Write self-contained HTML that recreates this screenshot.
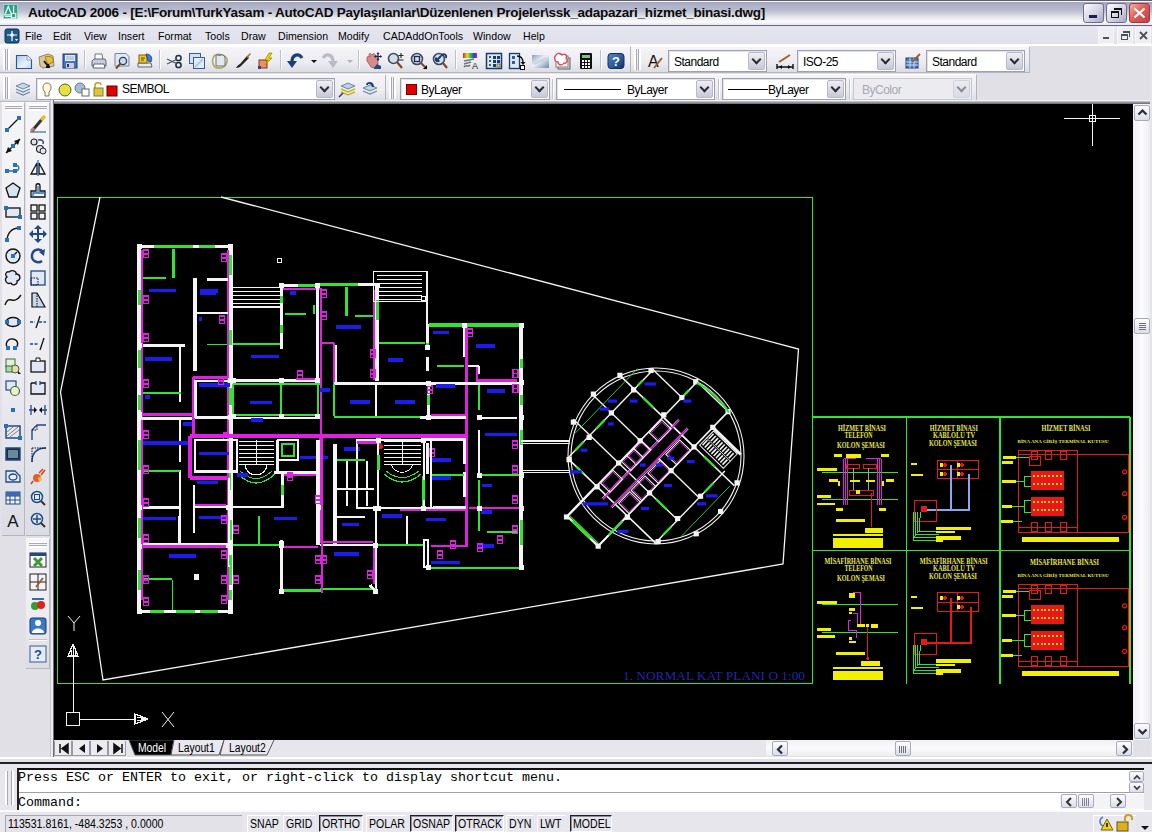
<!DOCTYPE html>
<html><head><meta charset="utf-8">
<style>
*{margin:0;padding:0;box-sizing:border-box}
html,body{width:1152px;height:832px;overflow:hidden;background:#e0e0e6;font-family:"Liberation Sans",sans-serif;font-size:11px;color:#000;position:relative}
.a{position:absolute}
#title{left:0;top:0;width:1152px;height:26px;background:linear-gradient(#5c5c72 0,#5c5c72 1px,#fafafe 1px,#fafafe 2px,#a2a4ba 2px,#aeb0c6 5px,#b8bace 10px,#d0d2dc 14px,#eaebee 18px,#fbfbfb 22px,#e4e4ea 25px,#68687e 25px,#68687e 26px)}
#title .t{left:28px;top:5px;font-size:13.5px;font-weight:bold;letter-spacing:-0.24px;color:#0a0a0a;white-space:nowrap}
.wb{position:absolute;top:3px;width:21px;height:20px;border:1px solid #6e6e88;border-radius:3px;background:linear-gradient(135deg,#fbfbff,#d8d8e6 50%,#a8a8c4)}
#menu{left:0;top:26px;width:1152px;height:20px;background:linear-gradient(#e6e6f2,#e0e0ea 18px,#fff 18px,#fff 20px)}
#menu span{position:absolute;top:3.5px;font-size:10.6px;color:#000}
.mb{position:absolute;top:1px;width:16px;height:17px;background:#ededf2;border:1px solid #f6f6f8}
.tbar{position:absolute;background:linear-gradient(#f5f5f8,#ececf1 60%,#dcdce4);border-right:1px solid #b5b5c2;border-bottom:1px solid #b5b5c2;border-top:1px solid #fff}
.grip{position:absolute;width:7px;border-left:2px solid #fff;border-right:2px solid #fff;box-shadow:inset 1px 0 #a8a8b6,inset -1px 0 #a8a8b6}
.ggrip{position:absolute;height:7px;border-top:2px solid #fff;border-bottom:2px solid #fff;box-shadow:inset 0 1px #a8a8b6,inset 0 -1px #a8a8b6}
.sep{position:absolute;width:2px;border-left:1px solid #c0c0cc;border-right:1px solid #fff}
.combo{position:absolute;background:#fff;border:1px solid #9da0b4;box-shadow:inset 1px 1px #e2e2e8}
.combo .tx{position:absolute;left:5px;top:3.5px;font-size:12px;letter-spacing:-0.5px;white-space:nowrap}
.dd{position:absolute;right:1px;top:1px;bottom:1px;width:17px;background:linear-gradient(#eeeef4,#c8c9d9);border:1px solid #b7b8c9;border-radius:2px}
.dd:after{content:"";position:absolute;left:4px;top:3px;width:5px;height:5px;border-right:2.2px solid #2a2a34;border-bottom:2.2px solid #2a2a34;transform:rotate(45deg)}
.ic{position:absolute;width:18px;height:18px}
#canvas{left:54px;top:104px;width:1079px;height:636px;background:#000;overflow:hidden}
.sb{position:absolute;background:linear-gradient(90deg,#f0f0f4,#fcfcfd 50%,#eeeef2)}
.sbtn{position:absolute;width:16px;height:16px;border:1px solid #a9aabd;border-radius:2px;background:linear-gradient(#fdfdff,#dcdde8)}
.mono{font-family:"Liberation Mono",monospace}
.stb{position:absolute;top:815px;height:17px;font-size:12px;padding-left:2px;padding-top:1px;white-space:nowrap;overflow:hidden;border:1px solid #e9e9ee;border-top-color:#fff;border-left-color:#fff}
.stb span,.crd span{display:inline-block;transform:scaleX(.88);transform-origin:0 0}
.stb.on{border:1px solid #1f1f26;border-right-color:#fff;border-bottom-color:#fff;box-shadow:inset 1px 1px #8d8d98}
</style></head><body>
<div id="title" class="a">
<svg class="a" style="left:3px;top:4px" width="15" height="15" viewBox="0 0 17 18" preserveAspectRatio="none"><rect x="0.5" y="0.5" width="16" height="17" fill="#2f9e8a" stroke="#a9d9cf"/><path d="M2 13 L6 3 L10 13 Z" fill="none" stroke="#e8fff8" stroke-width="1.4"/><path d="M2 15 H15 M12 2 V16" stroke="#e8fff8" stroke-width="1.4"/><rect x="9.5" y="11.5" width="5" height="5" fill="#2f9e8a" stroke="#fff" stroke-width="1.2"/></svg>
<div class="t a">AutoCAD 2006 - [E:\Forum\TurkYasam - AutoCAD Paylaşılanlar\Düzenlenen Projeler\ssk_adapazari_hizmet_binasi.dwg]</div>
<div class="wb" style="left:1083px"><div class="a" style="left:5px;top:11px;width:8px;height:3px;background:#1c1c50"></div></div>
<div class="wb" style="left:1106px"><div class="a" style="left:4px;top:7px;width:8px;height:7px;border:1px solid #111;border-top-width:2px"></div><div class="a" style="left:7px;top:4px;width:8px;height:7px;border-top:2px solid #111;border-right:1px solid #111"></div></div>
<div class="wb" style="left:1129px;background:linear-gradient(135deg,#f5b0a0,#e0605a 45%,#c8384a);border-color:#9a3a40"><svg class="a" style="left:3px;top:3px" width="13" height="12"><path d="M1.5 1.5 L11.5 10.5 M11.5 1.5 L1.5 10.5" stroke="#fff" stroke-width="2.2"/></svg></div>
</div><div id="menu" class="a"><svg class="a" style="left:4px;top:2px" width="17" height="16" viewBox="0 0 17 16"><rect x="1" y="1" width="14" height="14" rx="2" fill="#1d5a8c" stroke="#0d3050"/><path d="M8 3 V13 M3 7 H13" stroke="#fff" stroke-width="1.2"/><circle cx="8" cy="7" r="1.8" fill="#fff"/><path d="M11 11 l3 0 l-1.5 2z" fill="#fff"/></svg><span style="left:25px">File</span><span style="left:53px">Edit</span><span style="left:84px">View</span><span style="left:118px">Insert</span><span style="left:158px">Format</span><span style="left:205px">Tools</span><span style="left:241px">Draw</span><span style="left:278px">Dimension</span><span style="left:338px">Modify</span><span style="left:383px">CADAddOnTools</span><span style="left:473px">Window</span><span style="left:523px">Help</span><div class="mb" style="left:1098px"><div class="a" style="left:4px;top:9px;width:6px;height:2px;background:#505058"></div></div><div class="mb" style="left:1117px"><div class="a" style="left:3px;top:6px;width:7px;height:6px;border:1px solid #505058;border-top-width:2px"></div><div class="a" style="left:5px;top:3px;width:7px;height:6px;border-top:2px solid #505058;border-right:1px solid #505058"></div></div><div class="mb" style="left:1135px"><svg class="a" style="left:3px;top:3px" width="9" height="9"><path d="M1 1 L8 8 M8 1 L1 8" stroke="#505058" stroke-width="1.8"/></svg></div></div><div class="tbar" style="left:0px;top:46px;width:631px;height:27px"></div><div class="grip" style="left:3px;top:49px;height:21px"></div><div class="tbar" style="left:631px;top:46px;width:399px;height:27px"></div><div class="grip" style="left:634px;top:49px;height:21px"></div><div class="tbar" style="left:0px;top:74px;width:386px;height:28px"></div><div class="grip" style="left:3px;top:77px;height:22px"></div><div class="tbar" style="left:386px;top:74px;width:591px;height:28px"></div><div class="grip" style="left:389px;top:77px;height:22px"></div><div class="sep" style="left:84px;top:50px;height:19px"></div><div class="sep" style="left:159px;top:50px;height:19px"></div><div class="sep" style="left:280px;top:50px;height:19px"></div><div class="sep" style="left:358px;top:50px;height:19px"></div><div class="sep" style="left:455px;top:50px;height:19px"></div><div class="sep" style="left:600px;top:50px;height:19px"></div><svg class="a" style="left:15px;top:52px" width="18" height="18" viewBox="0 0 18 18"><defs><linearGradient id="nw" x1="0" y1="0" x2="1" y2="1"><stop offset="0" stop-color="#a8c8e8"/><stop offset=".6" stop-color="#e8f2fa"/><stop offset="1" stop-color="#b8d4ec"/></linearGradient></defs><path d="M1.5 3.5 H12 L16.5 8 V16.5 H1.5 Z" fill="url(#nw)" stroke="#2a5a8a" stroke-width="1.1"/><path d="M12 3.5 V8 H16.5" fill="#fff" stroke="#6a8aaa" stroke-width="0.8"/></svg><svg class="a" style="left:38px;top:52px" width="18" height="18" viewBox="0 0 18 18"><path d="M1 5 L10 2 L15 4 L16 14 L5 16 L2 14Z" fill="#d8c8a0" stroke="#8a7a50" stroke-width="0.9"/><path d="M7 5 C13 3 16 6 15 10 L10 13Z" fill="#e8c030" stroke="#8a7010" stroke-width="0.8"/><path d="M6 9 L10 14 M8 15 L11 15 L10 12" fill="none" stroke="#111" stroke-width="1.8"/></svg><svg class="a" style="left:61px;top:52px" width="18" height="18" viewBox="0 0 18 18"><rect x="2" y="2" width="14" height="14" fill="#4a72b8" stroke="#1c3a78"/><rect x="4" y="3" width="10" height="6" fill="#e4ecf8"/><path d="M5 5 H13 M5 7 H13" stroke="#9ab"/><rect x="5" y="11" width="8" height="5" fill="#c8d0e0"/><rect x="6" y="12" width="2" height="3" fill="#1c3a78"/></svg><svg class="a" style="left:90px;top:52px" width="18" height="18" viewBox="0 0 18 18"><path d="M5 2 H12 L13 8 H5Z" fill="#fff" stroke="#606880" stroke-width="0.9"/><path d="M2 9 L4 7 H15 L16 9 V14 H2Z" fill="#c8ccd8" stroke="#505870" stroke-width="0.9"/><path d="M4 12 H14 L15 16 H3Z" fill="#fff" stroke="#505870" stroke-width="0.9"/></svg><svg class="a" style="left:113px;top:52px" width="18" height="18" viewBox="0 0 18 18"><path d="M2 1.5 H13 L16 4.5 V14 H2Z" fill="#e0e8f4" stroke="#6a7a98" stroke-width="0.9"/><circle cx="10" cy="9" r="3.6" fill="#c8dcf0" stroke="#304050" stroke-width="1.3"/><path d="M7.5 11.5 L3 16.5" stroke="#7a4a30" stroke-width="2"/></svg><svg class="a" style="left:136px;top:52px" width="18" height="18" viewBox="0 0 18 18"><path d="M2 11 H15 L16 15 H2Z" fill="#e8eaf0" stroke="#505870" stroke-width="0.9"/><rect x="3" y="3" width="8" height="8" fill="#f0c820" stroke="#806010"/><path d="M5 6 H9 M5 8 H8" stroke="#604000"/><path d="M10 2 C15 2 17 6 15 10 L12 9Z" fill="#3a7ad0" stroke="#1a3a70" stroke-width="0.8"/></svg><svg class="a" style="left:165px;top:52px" width="18" height="18" viewBox="0 0 18 18"><circle cx="13.5" cy="6" r="2.6" fill="none" stroke="#1a2a40" stroke-width="1.5"/><circle cx="13.5" cy="13" r="2.6" fill="none" stroke="#1a2a40" stroke-width="1.5"/><path d="M2 7 L11.5 11.5 M2 12 L11.5 7.5" stroke="#505868" stroke-width="1.3"/></svg><svg class="a" style="left:188px;top:52px" width="18" height="18" viewBox="0 0 18 18"><rect x="1.5" y="1.5" width="11" height="10" fill="#cfe0f0" stroke="#3a6090"/><rect x="5.5" y="5.5" width="11" height="11" fill="#e0ecf8" stroke="#3a6090"/><path d="M7 15 L15 7" stroke="#b0c8e0" stroke-width="2"/></svg><svg class="a" style="left:211px;top:52px" width="18" height="18" viewBox="0 0 18 18"><path d="M3 4 C6 1 14 2 16 7 C17 13 12 17 6 16 C2 15 0 9 3 4Z" fill="none" stroke="#b8a850" stroke-width="1.6"/><path d="M5 3 H12 L14 5 V14 H5Z" fill="#e0e8f0" stroke="#5a6a80" stroke-width="0.9"/><path d="M7 2 H10 V4 H7Z" fill="#888"/></svg><svg class="a" style="left:234px;top:52px" width="18" height="18" viewBox="0 0 18 18"><path d="M2 16 C3 14 4 13 6 12 L13 4 L15 6 L7 14 C6 15 4 16 2 16Z" fill="#222"/><path d="M12 5 L16 1 L17 2 L13.5 6Z" fill="#a07040"/></svg><svg class="a" style="left:257px;top:52px" width="18" height="18" viewBox="0 0 18 18"><rect x="2" y="8" width="8" height="8" fill="#f09060" stroke="#903010"/><path d="M12 1 L8 8 H11 L8 13 L15 6 H12 L15 1Z" fill="#f0d000" stroke="#a08000" stroke-width="0.7"/><rect x="1" y="14" width="3" height="3" fill="#1c4a8c"/></svg><svg class="a" style="left:286px;top:52px" width="18" height="18" viewBox="0 0 18 18"><path d="M16 6 C13 1 6 2 6 10" fill="none" stroke="#1b3f78" stroke-width="3.2"/><path d="M1 9 L11 9 L6 16Z" fill="#1b3f78"/></svg><svg class="a" style="left:305px;top:52px" width="18" height="18" viewBox="0 0 18 18"><path d="M6 8 H12 L9 11 Z" fill="#111"/></svg><svg class="a" style="left:321px;top:52px" width="18" height="18" viewBox="0 0 18 18"><path d="M2 6 C5 1 12 2 12 10" fill="none" stroke="#b8bcc4" stroke-width="3.2"/><path d="M7 9 L17 9 L12 16Z" fill="#b8bcc4"/></svg><svg class="a" style="left:341px;top:52px" width="18" height="18" viewBox="0 0 18 18"><path d="M6 8 H12 L9 11 Z" fill="#b0b0b8"/></svg><svg class="a" style="left:365px;top:52px" width="18" height="18" viewBox="0 0 18 18"><path d="M2 6 C2 4 4 4 5 5 L4 3 C4 1 6 1 7 3 L8 2 C9 1 10 2 10 3 L11 4 C12 3 13 4 13 5 L13 12 L9 16 L6 15 L2 9Z" fill="#d88a86" stroke="#a05050" stroke-width="0.8"/><path d="M9 16 L12 12 L16 14 V17 H9Z" fill="#1f4a86"/><path d="M13 1 V8 M9.5 4.5 H16.5" stroke="#1a2a50" stroke-width="1.2"/><path d="M13 0 L11.5 2 H14.5Z M13 9 L11.5 7 H14.5Z M9 4.5 L11 3 V6Z M17 4.5 L15 3 V6Z" fill="#1a2a50"/></svg><svg class="a" style="left:387px;top:52px" width="18" height="18" viewBox="0 0 18 18"><circle cx="6.5" cy="6.5" r="5" fill="#d4dce8" stroke="#3c4c60" stroke-width="1.6"/><path d="M10 10 L15 16" stroke="#7a4a30" stroke-width="2.2"/><path d="M14 1 V6 M11.5 3.5 H16.5 M11.5 8 H16.5" stroke="#222" stroke-width="1.1"/></svg><svg class="a" style="left:410px;top:52px" width="18" height="18" viewBox="0 0 18 18"><circle cx="7" cy="7" r="5.5" fill="#d4dce8" stroke="#3c4c60" stroke-width="1.6"/><rect x="4.5" y="4.5" width="5" height="5" fill="none" stroke="#1a2a50" stroke-width="1.3"/><path d="M11 11 L15 15" stroke="#7a4a30" stroke-width="2.2"/><path d="M13 17 L17 13 V17Z" fill="#000"/></svg><svg class="a" style="left:432px;top:52px" width="18" height="18" viewBox="0 0 18 18"><circle cx="7" cy="7" r="5.5" fill="#d4dce8" stroke="#3c4c60" stroke-width="1.6"/><path d="M4 9 L9 4 M4 9 V5.5 M4 9 H7.5" stroke="#1a3a70" stroke-width="2"/><path d="M9 4 C11 1 15 2 14 6" fill="none" stroke="#1a3a70" stroke-width="1.8"/><path d="M11 11 L15 16" stroke="#7a4a30" stroke-width="2.2"/></svg><svg class="a" style="left:462px;top:52px" width="18" height="18" viewBox="0 0 18 18"><defs><linearGradient id="rb" x1="0" x2="1"><stop offset="0" stop-color="#e02020"/><stop offset=".3" stop-color="#e0e020"/><stop offset=".55" stop-color="#20c040"/><stop offset=".8" stop-color="#2040e0"/><stop offset="1" stop-color="#c020c0"/></linearGradient></defs><rect x="1" y="1" width="14" height="5" fill="url(#rb)"/><path d="M2 9 L12 7 M2 12 L9 10" stroke="#707880" stroke-width="1.6"/><path d="M2 15 C4 12 6 16 8 13" fill="none" stroke="#606870" stroke-width="1.4"/><text x="13" y="17" font-size="9" font-family="Liberation Sans" text-anchor="middle" fill="#222">A</text></svg><svg class="a" style="left:485px;top:52px" width="18" height="18" viewBox="0 0 18 18"><rect x="1.5" y="1.5" width="15" height="15" fill="#dce8f4" stroke="#1a3a70" stroke-width="1.5"/><path d="M4 4h2v2H4zM4 8h2v2H4zM4 12h2v2H4z" fill="#3a6a3a"/><path d="M8 4h3v3H8zM12 4h3v3h-3zM8 8h3v3H8zM12 8h3v3h-3zM8 12h3v3H8z" fill="#1a3a70"/><rect x="12" y="12" width="3" height="3" fill="#e0e080" stroke="#333" stroke-width="0.6"/></svg><svg class="a" style="left:508px;top:52px" width="18" height="18" viewBox="0 0 18 18"><rect x="1.5" y="1.5" width="10" height="15" fill="#dce8f4" stroke="#1a3a70" stroke-width="1.3"/><path d="M4 4h3v3H4zM4 9h3v3H4z" fill="#3a5a90"/><path d="M9 4 C14 4 15 7 15 11" fill="none" stroke="#111" stroke-width="1.3"/><path d="M12.5 10 L17.5 10 L15 13Z" fill="#111"/><rect x="12.5" y="13.5" width="4" height="4" fill="#fff" stroke="#111"/></svg><svg class="a" style="left:531px;top:52px" width="18" height="18" viewBox="0 0 18 18"><defs><linearGradient id="ss" x1="0" y1="0" x2="1" y2="1"><stop offset="0" stop-color="#8aa0b8"/><stop offset=".45" stop-color="#eef2f6"/><stop offset="1" stop-color="#6a88a8"/></linearGradient></defs><rect x="1" y="3" width="17" height="13" fill="url(#ss)"/><path d="M3 12 L15 6" stroke="#c8d4e0" stroke-width="2.5"/></svg><svg class="a" style="left:553px;top:52px" width="18" height="18" viewBox="0 0 18 18"><rect x="5" y="6" width="12" height="11" fill="#d8d8d8" stroke="#606060"/><rect x="3" y="4" width="12" height="11" fill="#f4f4f4" stroke="#808080"/><path d="M3 3 C5 0 8 2 9 3 C11 1 15 3 13 6 C16 8 13 12 11 11 C9 14 5 13 5 10 C1 10 1 5 3 3Z" fill="#fff" stroke="#e04050" stroke-width="1.3"/></svg><svg class="a" style="left:577px;top:52px" width="18" height="18" viewBox="0 0 18 18"><rect x="3" y="1" width="12" height="16" rx="1" fill="#111"/><rect x="5" y="3" width="8" height="3" fill="#80c080"/><path d="M5 8h2v2H5zM8 8h2v2H8zM11 8h2v2h-2zM5 11h2v2H5zM8 11h2v2H8zM11 11h2v2h-2zM5 14h2v2H5zM8 14h2v2H8zM11 14h2v2h-2z" fill="#fff"/></svg><svg class="a" style="left:607px;top:52px" width="18" height="18" viewBox="0 0 18 18"><defs><linearGradient id="hp" x1="0" y1="0" x2="1" y2="1"><stop offset="0" stop-color="#5a88c8"/><stop offset="1" stop-color="#0e3470"/></linearGradient></defs><rect x="1" y="1.5" width="16" height="15" rx="3" fill="url(#hp)" stroke="#0e3060"/><text x="9" y="14" font-size="13" font-weight="bold" text-anchor="middle" fill="#fff" font-family="Liberation Sans">?</text></svg><svg class="a" style="left:646px;top:52px" width="18" height="18" viewBox="0 0 18 18"><text x="2" y="15" font-size="16" font-family="Liberation Sans" fill="#111">A</text><path d="M8 16 L16 6" stroke="#a06030" stroke-width="2"/></svg><div class="combo" style="left:668px;top:50px;width:99px;height:22px;background:#fff"><div class="tx" style="color:#000">Standard</div><div class="dd"></div></div><svg class="a" style="left:776px;top:52px" width="18" height="18" viewBox="0 0 18 18"><path d="M3 10 L14 3" stroke="#a06030" stroke-width="2"/><path d="M1 15 H17 M1 12 V17 M17 12 V17" stroke="#111" stroke-width="1.4"/><path d="M3 15 L6 13 V17Z M15 15 L12 13 V17Z" fill="#111"/></svg><div class="combo" style="left:797px;top:50px;width:99px;height:22px;background:#fff"><div class="tx" style="color:#000">ISO-25</div><div class="dd"></div></div><svg class="a" style="left:904px;top:52px" width="18" height="18" viewBox="0 0 18 18"><rect x="2" y="6" width="12" height="10" fill="#4a7ac8" stroke="#223c70"/><path d="M2 10 H14 M2 13 H14 M6 6 V16 M10 6 V16" stroke="#cfe0f4"/><path d="M8 10 L16 2" stroke="#a06030" stroke-width="2"/></svg><div class="combo" style="left:926px;top:50px;width:99px;height:22px;background:#fff"><div class="tx" style="color:#000">Standard</div><div class="dd"></div></div><svg class="a" style="left:14px;top:80px" width="18" height="18" viewBox="0 0 18 18"><path d="M2 6 L9 3 L16 6 L9 9Z" fill="#c8d8e8" stroke="#6a88a8"/><path d="M2 9 L9 12 L16 9 M2 12 L9 15 L16 12" fill="none" stroke="#6a88a8" stroke-width="1.3"/></svg><div class="combo" style="left:36px;top:78px;width:299px;height:22px"><svg class="a" style="left:4px;top:2px" width="80" height="17" viewBox="0 0 80 17"><path d="M6 2 C1 2 1 9 4 11 V15 H8 V11 C11 9 11 2 6 2Z" fill="#fff8d0" stroke="#777"/><circle cx="24" cy="9" r="6" fill="#e8e040" stroke="#4a6a20"/><circle cx="39" cy="7" r="5" fill="#a8bcd0" stroke="#6a7a90"/><rect x="41" y="8" width="7" height="7" fill="#fff" stroke="#666"/><path d="M54 8 V4 C54 1 60 1 60 4" fill="none" stroke="#b8a030" stroke-width="1.5"/><rect x="53" y="7" width="9" height="8" fill="#d8c840" stroke="#907820"/><rect x="66" y="5" width="10" height="10" fill="#e00000" stroke="#600"/></svg><div class="tx" style="left:85px;top:3px">SEMBOL</div><div class="dd"></div></div><svg class="a" style="left:338px;top:80px" width="18" height="18" viewBox="0 0 18 18"><path d="M3 6 L10 3 L17 6 L10 9Z" fill="#c0d0e0" stroke="#6a88a8"/><path d="M3 9 L10 12 L17 9 M3 12 L10 15 L17 12" fill="none" stroke="#c8b820" stroke-width="1.6"/><path d="M1 17 L5 13" stroke="#1a3a70" stroke-width="1.5"/></svg><svg class="a" style="left:361px;top:80px" width="18" height="18" viewBox="0 0 18 18"><path d="M2 8 L9 5 L16 8 L9 11Z" fill="#c0d0e0" stroke="#6a88a8"/><path d="M2 11 L9 14 L16 11" fill="none" stroke="#6a88a8" stroke-width="1.3"/><path d="M12 7 C12 2 6 2 6 5" fill="none" stroke="#1a3a70" stroke-width="1.8"/></svg><div class="combo" style="left:400px;top:78px;width:150px;height:22px"><div class="a" style="left:5px;top:5px;width:11px;height:11px;background:#e00000;border:1px solid #700"></div><div class="tx" style="left:20px">ByLayer</div><div class="dd"></div></div><div class="sep" style="left:552px;top:79px;height:20px"></div><div class="combo" style="left:556px;top:78px;width:159px;height:22px"><div class="a" style="left:7px;top:10px;width:57px;height:1px;background:#000"></div><div class="tx" style="left:70px">ByLayer</div><div class="dd"></div></div><div class="sep" style="left:718px;top:79px;height:20px"></div><div class="combo" style="left:722px;top:78px;width:124px;height:22px"><div class="a" style="left:5px;top:10px;width:40px;height:1px;background:#000"></div><div class="tx" style="left:45px">ByLayer</div><div class="dd"></div></div><div class="sep" style="left:849px;top:79px;height:20px"></div><div class="combo" style="left:853px;top:78px;width:119px;height:22px;background:#ececf0;border-color:#c8c8d0;box-shadow:none"><div class="tx" style="left:8px;color:#a8a8b0">ByColor</div><div class="dd" style="opacity:.5"></div></div><div class="tbar" style="left:2px;top:102px;width:23px;height:434px"></div><div class="ggrip" style="left:5px;top:104px;width:17px"></div><div class="tbar" style="left:26px;top:102px;width:24px;height:434px"></div><div class="ggrip" style="left:29px;top:104px;width:18px"></div><div class="tbar" style="left:26px;top:538px;width:24px;height:131px"></div><div class="ggrip" style="left:29px;top:541px;width:18px"></div><svg class="a" style="left:4px;top:115px" width="18" height="18" viewBox="0 0 18 18"><path d="M3 15 L15 3" stroke="#111" stroke-width="1.3"/><rect x="1" y="13" width="4" height="4" fill="#2a70b8"/><rect x="13" y="1" width="4" height="4" fill="#2a70b8"/></svg><svg class="a" style="left:4px;top:137px" width="18" height="18" viewBox="0 0 18 18"><path d="M2 16 L16 2" stroke="#111" stroke-width="1.5"/><path d="M16 2 L10 4 L14 8Z M2 16 L4 10 L8 14Z" fill="#111"/><rect x="7" y="7" width="4" height="4" fill="#2a70b8"/></svg><svg class="a" style="left:4px;top:159px" width="18" height="18" viewBox="0 0 18 18"><path d="M2 12 H11 M11 6 C16 6 16 12 11 12" fill="none" stroke="#2a70b8" stroke-width="1.4"/><rect x="1" y="10" width="4" height="4" fill="#2a70b8"/><rect x="9" y="10" width="4" height="4" fill="#2a70b8"/><rect x="9" y="4" width="4" height="4" fill="#2a70b8"/></svg><svg class="a" style="left:4px;top:181px" width="18" height="18" viewBox="0 0 18 18"><path d="M9 2 L16 7 L13 16 H5 L2 7Z" fill="#d8e4f0" stroke="#111" stroke-width="1.3"/></svg><svg class="a" style="left:4px;top:203px" width="18" height="18" viewBox="0 0 18 18"><rect x="2" y="5" width="14" height="9" fill="#dfe8f4" stroke="#111" stroke-width="1.3"/><rect x="0" y="3" width="4" height="4" fill="#2a70b8"/><rect x="14" y="12" width="4" height="4" fill="#2a70b8"/></svg><svg class="a" style="left:4px;top:225px" width="18" height="18" viewBox="0 0 18 18"><path d="M3 16 C3 8 8 3 15 3" fill="none" stroke="#111" stroke-width="1.4"/><rect x="1" y="13" width="4" height="4" fill="#2a70b8"/><rect x="13" y="1" width="4" height="4" fill="#2a70b8"/></svg><svg class="a" style="left:4px;top:247px" width="18" height="18" viewBox="0 0 18 18"><circle cx="9" cy="9" r="7" fill="#dfe8f4" stroke="#111" stroke-width="1.4"/><path d="M9 9 L13 5" stroke="#111" stroke-width="1.3"/><rect x="7" y="7" width="4" height="4" fill="#2a70b8"/></svg><svg class="a" style="left:4px;top:269px" width="18" height="18" viewBox="0 0 18 18"><path d="M5 3 C9 0 13 3 12 5 C17 5 17 11 13 12 C14 16 8 17 7 14 C2 16 0 10 3 8 C0 5 3 2 5 3Z" fill="#dfe8f4" stroke="#111" stroke-width="1.3"/></svg><svg class="a" style="left:4px;top:291px" width="18" height="18" viewBox="0 0 18 18"><path d="M1 14 C5 2 9 16 17 4" fill="none" stroke="#111" stroke-width="1.4"/></svg><svg class="a" style="left:4px;top:313px" width="18" height="18" viewBox="0 0 18 18"><ellipse cx="9" cy="9" rx="7" ry="4.5" fill="#dfe8f4" stroke="#111" stroke-width="1.4"/><rect x="1" y="7" width="4" height="4" fill="#2a70b8"/><rect x="13" y="7" width="4" height="4" fill="#2a70b8"/></svg><svg class="a" style="left:4px;top:335px" width="18" height="18" viewBox="0 0 18 18"><path d="M4 13 C0 9 4 3 9 4 C15 5 15 12 10 13" fill="none" stroke="#111" stroke-width="1.4"/><rect x="2" y="11" width="4" height="4" fill="#2a70b8"/><rect x="9" y="11" width="4" height="4" fill="#2a70b8"/></svg><svg class="a" style="left:4px;top:357px" width="18" height="18" viewBox="0 0 18 18"><rect x="2" y="2" width="9" height="8" fill="#e4f0d8" stroke="#3a6a3a"/><circle cx="11" cy="12" r="4" fill="#e0e0a0" stroke="#555"/><rect x="2" y="9" width="6" height="6" fill="#b0d8b0" stroke="#3a6a3a"/><path d="M14 14 L17 17 L14 17Z" fill="#111"/></svg><svg class="a" style="left:4px;top:379px" width="18" height="18" viewBox="0 0 18 18"><rect x="2" y="2" width="10" height="9" fill="#dfe8f4" stroke="#1f4a86" stroke-width="1.2"/><circle cx="11" cy="12" r="4.5" fill="#e8f0d0" stroke="#3a6a3a" stroke-width="1.2"/></svg><svg class="a" style="left:4px;top:401px" width="18" height="18" viewBox="0 0 18 18"><rect x="7" y="7" width="4" height="4" fill="#2a70b8"/></svg><svg class="a" style="left:4px;top:423px" width="18" height="18" viewBox="0 0 18 18"><rect x="2" y="3" width="14" height="12" fill="none" stroke="#1f4a86" stroke-width="1.5"/><path d="M3 13 L14 4 M6 14 L15 7 M3 9 L9 4" stroke="#888" stroke-width="1"/><rect x="0" y="1" width="4" height="4" fill="#2a70b8"/><rect x="14" y="13" width="4" height="4" fill="#2a70b8"/></svg><svg class="a" style="left:4px;top:445px" width="18" height="18" viewBox="0 0 18 18"><rect x="2" y="3" width="14" height="12" fill="#1c2c3c" stroke="#1f4a86" stroke-width="1.5"/><rect x="4" y="5" width="10" height="8" fill="#6a8a9a"/></svg><svg class="a" style="left:4px;top:467px" width="18" height="18" viewBox="0 0 18 18"><path d="M2 4 H11 L16 9 V15 H2Z" fill="#e4ecf4" stroke="#1f4a86" stroke-width="1.3"/><ellipse cx="9" cy="10" rx="4" ry="3" fill="none" stroke="#1f4a86" stroke-width="1.3"/></svg><svg class="a" style="left:4px;top:489px" width="18" height="18" viewBox="0 0 18 18"><rect x="2" y="3" width="14" height="12" fill="#f0f4fa" stroke="#1f4a86"/><path d="M2 7 H16 M2 11 H16 M6 3 V15 M11 3 V15" stroke="#1f4a86"/><rect x="2" y="3" width="14" height="4" fill="#3a6ab0"/></svg><svg class="a" style="left:4px;top:511px" width="18" height="18" viewBox="0 0 18 18"><text x="9" y="16" font-size="17" text-anchor="middle" font-family="Liberation Sans" fill="#111">A</text></svg><svg class="a" style="left:29px;top:115px" width="18" height="18" viewBox="0 0 18 18"><path d="M3 16 L14 3" stroke="#333" stroke-width="3"/><path d="M12 5 L16 1" stroke="#e0c030" stroke-width="3.5"/><path d="M2 16 L5 13" stroke="#c08070" stroke-width="3"/><path d="M1 17 H17" stroke="#1f4a86"/></svg><svg class="a" style="left:29px;top:137px" width="18" height="18" viewBox="0 0 18 18"><circle cx="5" cy="5" r="3" fill="#e0e4ee" stroke="#222" stroke-width="1.2"/><circle cx="11" cy="12" r="3.5" fill="#e0e4ee" stroke="#222" stroke-width="1.2"/><circle cx="14" cy="14" r="3" fill="#e0e4ee" stroke="#222"/><path d="M9 3 C14 2 15 5 14 7" fill="none" stroke="#1f4a86" stroke-width="1.5"/></svg><svg class="a" style="left:29px;top:159px" width="18" height="18" viewBox="0 0 18 18"><path d="M8 4 L2 15 H8Z M10 4 L16 15 H10Z" fill="none" stroke="#111" stroke-width="1.3"/><path d="M9 1 V17" stroke="#2a70b8" stroke-width="1.3"/></svg><svg class="a" style="left:29px;top:181px" width="18" height="18" viewBox="0 0 18 18"><path d="M2 16 V10 H7 V5 C7 2 11 2 11 5 V10 H16 V16Z" fill="none" stroke="#111" stroke-width="1.3"/><path d="M4 16 V12 H9 V5 M9 12 H16" fill="none" stroke="#2a70b8" stroke-width="1.3"/></svg><svg class="a" style="left:29px;top:203px" width="18" height="18" viewBox="0 0 18 18"><rect x="2" y="2" width="6" height="6" fill="none" stroke="#111" stroke-width="1.3"/><rect x="10" y="2" width="6" height="6" fill="none" stroke="#111" stroke-width="1.3"/><rect x="2" y="10" width="6" height="6" fill="none" stroke="#111" stroke-width="1.3"/><rect x="10" y="10" width="6" height="6" fill="none" stroke="#111" stroke-width="1.3"/></svg><svg class="a" style="left:29px;top:225px" width="18" height="18" viewBox="0 0 18 18"><path d="M9 1 V17 M1 9 H17" stroke="#1f4a86" stroke-width="2"/><path d="M9 0 L5 4 H13Z M9 18 L5 14 H13Z M0 9 L4 5 V13Z M18 9 L14 5 V13Z" fill="#1f4a86"/></svg><svg class="a" style="left:29px;top:247px" width="18" height="18" viewBox="0 0 18 18"><path d="M14 5 C11 1 4 2 3 8 C2 14 9 17 13 14" fill="none" stroke="#1f4a86" stroke-width="2.4"/><path d="M16 2 L15 9 L10 5Z" fill="#1f4a86"/></svg><svg class="a" style="left:29px;top:269px" width="18" height="18" viewBox="0 0 18 18"><rect x="2" y="2" width="14" height="14" fill="#dfe8f4" stroke="#1f4a86" stroke-width="1.3"/><rect x="2" y="9" width="7" height="7" fill="none" stroke="#111" stroke-dasharray="1.5 1"/></svg><svg class="a" style="left:29px;top:291px" width="18" height="18" viewBox="0 0 18 18"><path d="M3 2 H8 L16 16 H3Z" fill="#c8d8ec" stroke="#111" stroke-width="1.2"/><path d="M8 2 V16" stroke="#111" stroke-dasharray="1.5 1"/></svg><svg class="a" style="left:29px;top:313px" width="18" height="18" viewBox="0 0 18 18"><path d="M1 9 H6 M10 9 H17" stroke="#1f4a86" stroke-width="1.4" stroke-dasharray="3 1.5"/><path d="M11 3 L7 15" stroke="#111" stroke-width="1.3"/></svg><svg class="a" style="left:29px;top:335px" width="18" height="18" viewBox="0 0 18 18"><path d="M1 9 H10" stroke="#1f4a86" stroke-width="1.4" stroke-dasharray="3 1.5"/><path d="M15 3 L11 15" stroke="#111" stroke-width="1.3"/></svg><svg class="a" style="left:29px;top:357px" width="18" height="18" viewBox="0 0 18 18"><rect x="2" y="4" width="14" height="11" fill="#dfe8f4" stroke="#111" stroke-width="1.3"/><path d="M7 4 V1 H11 V4" fill="#fff" stroke="#111"/></svg><svg class="a" style="left:29px;top:379px" width="18" height="18" viewBox="0 0 18 18"><path d="M2 4 H7 M11 4 H16 V15 H2 V4" fill="none" stroke="#111" stroke-width="1.3"/><rect x="3" y="5" width="12" height="9" fill="#dfe8f4"/><path d="M7 2 V6 M11 2 V6" stroke="#1f4a86" stroke-width="1.3"/></svg><svg class="a" style="left:29px;top:401px" width="18" height="18" viewBox="0 0 18 18"><path d="M2 4 V14 M16 4 V14" stroke="#1f4a86" stroke-width="1.3"/><path d="M0 9 H7 M11 9 H18" stroke="#1f4a86" stroke-width="1.6"/><path d="M8 9 L5 6 V12Z M10 9 L13 6 V12Z" fill="#111"/></svg><svg class="a" style="left:29px;top:423px" width="18" height="18" viewBox="0 0 18 18"><path d="M3 17 V7 L8 2 H17" fill="none" stroke="#1f4a86" stroke-width="1.4"/><path d="M3 7 H8 V2" fill="none" stroke="#111" stroke-dasharray="1.5 1"/></svg><svg class="a" style="left:29px;top:445px" width="18" height="18" viewBox="0 0 18 18"><path d="M3 17 C3 8 8 3 17 3" fill="none" stroke="#1f4a86" stroke-width="1.4"/><path d="M3 3 H17 M3 3 V17" fill="none" stroke="#111" stroke-dasharray="1.5 1"/></svg><svg class="a" style="left:29px;top:467px" width="18" height="18" viewBox="0 0 18 18"><circle cx="8" cy="11" r="4" fill="#e06030"/><path d="M4 14 L2 17 M12 8 L16 3 M10 6 L14 2" stroke="#d04020" stroke-width="1.5"/><circle cx="11" cy="12" r="2" fill="#f0c040"/></svg><svg class="a" style="left:29px;top:489px" width="18" height="18" viewBox="0 0 18 18"><circle cx="8" cy="8" r="5.5" fill="#dfe8f4" stroke="#1f4a86" stroke-width="1.5"/><rect x="5.5" y="5.5" width="5" height="5" fill="none" stroke="#1f4a86"/><path d="M12 12 L16 16" stroke="#333" stroke-width="2"/></svg><svg class="a" style="left:29px;top:511px" width="18" height="18" viewBox="0 0 18 18"><circle cx="8" cy="8" r="5.5" fill="#dfe8f4" stroke="#1f4a86" stroke-width="1.5"/><path d="M8 4 V12 M4 8 H12" stroke="#1f4a86" stroke-width="1.5"/><path d="M12 12 L16 16" stroke="#333" stroke-width="2"/></svg><svg class="a" style="left:29px;top:551px" width="18" height="18" viewBox="0 0 18 18"><rect x="1" y="2" width="16" height="14" fill="#fff" stroke="#222"/><rect x="1" y="2" width="16" height="3" fill="#1f4a86"/><path d="M5 7 L13 15 M13 7 L5 15" stroke="#3a9a3a" stroke-width="3"/></svg><svg class="a" style="left:29px;top:573px" width="18" height="18" viewBox="0 0 18 18"><rect x="1" y="1" width="16" height="16" fill="#f4f4f8" stroke="#222"/><path d="M9 1 V17 M1 9 H17" stroke="#222"/><path d="M7 14 L14 5" stroke="#a06030" stroke-width="2"/></svg><svg class="a" style="left:29px;top:595px" width="18" height="18" viewBox="0 0 18 18"><circle cx="6" cy="11" r="4" fill="#30a030"/><circle cx="12" cy="10" r="4" fill="#e02020"/><path d="M3 4 H15" stroke="#2a70b8" stroke-width="2"/></svg><svg class="a" style="left:29px;top:617px" width="18" height="18" viewBox="0 0 18 18"><rect x="1" y="1" width="16" height="16" rx="2" fill="#3a78c8" stroke="#1a3a70"/><circle cx="9" cy="6" r="3" fill="#fff"/><path d="M3 16 C3 10 15 10 15 16Z" fill="#fff"/></svg><div class="a" style="left:29px;top:639px;width:18px;height:2px;border-top:1px solid #c0c0cc;border-bottom:1px solid #fff"></div><svg class="a" style="left:29px;top:645px" width="18" height="18" viewBox="0 0 18 18"><rect x="1" y="1" width="16" height="16" fill="#e4ecf8" stroke="#3a5a90"/><text x="9" y="14" font-size="13" font-weight="bold" text-anchor="middle" fill="#1f4a86" font-family="Liberation Sans">?</text></svg><div class="a" style="left:50px;top:100px;width:1102px;height:4px;background:linear-gradient(#f2f2f4 0,#f2f2f4 1px,#c8c8ce 1px,#b0b0b8 2px,#78787e 3px)"></div><div class="a" style="left:50px;top:100px;width:4px;height:658px;background:linear-gradient(90deg,#c8c8d0 0,#c8c8d0 1px,#ececf0 1px,#ececf0 3px,#6e6e76 3px)"></div><div id="canvas" class="a"><svg width="1079" height="636" viewBox="54 104 1079 636" style="position:absolute;left:0;top:0" shape-rendering="crispEdges"><rect x="57.5" y="197.5" width="755" height="486" fill="none" stroke="#2ee62e" stroke-width="1.2"/><g shape-rendering="auto"><polyline points="100,197 60.5,392 103,680 783,564 798.5,349 221,197" fill="none" stroke="#f4f4f4" stroke-width="1.3"/></g><rect x="277.5" y="258.5" width="4" height="4" fill="none" stroke="#f4f4f4" stroke-width="1.3"/><line x1="1064" y1="118.5" x2="1120" y2="118.5" stroke="#f4f4f4" stroke-width="1.2"/><line x1="1092.5" y1="104" x2="1092.5" y2="146" stroke="#f4f4f4" stroke-width="1.2"/><rect x="1089.5" y="115.5" width="6" height="6" fill="none" stroke="#f4f4f4" stroke-width="1"/><g stroke="#f0f0f0" stroke-width="1.2" fill="none"><rect x="66.5" y="712.5" width="13" height="13" fill="none" stroke="#f0f0f0" stroke-width="1.2"/><line x1="73" y1="712" x2="73" y2="656" stroke="#f4f4f4" stroke-width="1"/><polygon points="68,656 73,644 78,656" fill="none" stroke="#f0f0f0" stroke-width="1.2"/><line x1="73" y1="646" x2="73" y2="656" stroke="#f4f4f4" stroke-width="1"/><line x1="71" y1="650" x2="71" y2="656" stroke="#f4f4f4" stroke-width="1"/><line x1="75" y1="650" x2="75" y2="656" stroke="#f4f4f4" stroke-width="1"/><line x1="79" y1="719" x2="135" y2="719" stroke="#f4f4f4" stroke-width="1"/><polygon points="135,714 148,719 135,724" fill="none" stroke="#f0f0f0" stroke-width="1.2"/><line x1="137" y1="717" x2="146" y2="719" stroke="#f4f4f4" stroke-width="1"/><line x1="137" y1="721" x2="146" y2="719" stroke="#f4f4f4" stroke-width="1"/><g shape-rendering="auto"><line x1="68" y1="616" x2="74" y2="623" stroke="#f4f4f4" stroke-width="1"/><line x1="80" y1="616" x2="74" y2="623" stroke="#f4f4f4" stroke-width="1"/><line x1="74" y1="623" x2="74" y2="631" stroke="#f4f4f4" stroke-width="1"/><line x1="162" y1="712" x2="174" y2="727" stroke="#f4f4f4" stroke-width="1"/><line x1="174" y1="712" x2="162" y2="727" stroke="#f4f4f4" stroke-width="1"/></g></g><text x="623" y="680" fill="#2626a8" font-size="13.2" font-family="Liberation Serif" textLength="182" lengthAdjust="spacingAndGlyphs">1. NORMAL KAT PLANI O 1:00</text><line x1="137" y1="246.5" x2="232" y2="246.5" stroke="#2ee62e" stroke-width="3"/><line x1="137" y1="246.5" x2="154" y2="246.5" stroke="#f4f4f4" stroke-width="3.5"/><line x1="193" y1="246.5" x2="199" y2="246.5" stroke="#f4f4f4" stroke-width="3.5"/><line x1="215" y1="246.5" x2="232" y2="246.5" stroke="#f4f4f4" stroke-width="3.5"/><line x1="137" y1="611.5" x2="232" y2="611.5" stroke="#2ee62e" stroke-width="3"/><line x1="137" y1="611.5" x2="150" y2="611.5" stroke="#f4f4f4" stroke-width="3.5"/><line x1="164" y1="611.5" x2="176" y2="611.5" stroke="#f4f4f4" stroke-width="3.5"/><line x1="195" y1="611.5" x2="200" y2="611.5" stroke="#f4f4f4" stroke-width="3.5"/><line x1="218" y1="611.5" x2="232" y2="611.5" stroke="#f4f4f4" stroke-width="3.5"/><line x1="139" y1="246" x2="139" y2="613" stroke="#f4f4f4" stroke-width="4.2"/><line x1="139" y1="290" x2="139" y2="305" stroke="#2ee62e" stroke-width="3"/><line x1="139" y1="350" x2="139" y2="368" stroke="#2ee62e" stroke-width="3"/><line x1="139" y1="395" x2="139" y2="410" stroke="#2ee62e" stroke-width="3"/><line x1="139" y1="440" x2="139" y2="470" stroke="#2ee62e" stroke-width="3"/><line x1="139" y1="518" x2="139" y2="538" stroke="#2ee62e" stroke-width="3"/><line x1="139" y1="570" x2="139" y2="590" stroke="#2ee62e" stroke-width="3"/><line x1="142" y1="250" x2="142" y2="600" stroke="#e020e0" stroke-width="1.5"/><line x1="230.5" y1="246" x2="230.5" y2="613" stroke="#f4f4f4" stroke-width="4.2"/><line x1="230.5" y1="255" x2="230.5" y2="275" stroke="#2ee62e" stroke-width="3"/><line x1="230.5" y1="330" x2="230.5" y2="345" stroke="#2ee62e" stroke-width="3"/><line x1="230.5" y1="388" x2="230.5" y2="405" stroke="#2ee62e" stroke-width="3"/><line x1="230.5" y1="470" x2="230.5" y2="490" stroke="#2ee62e" stroke-width="3"/><line x1="230.5" y1="520" x2="230.5" y2="540" stroke="#2ee62e" stroke-width="3"/><line x1="230.5" y1="565" x2="230.5" y2="585" stroke="#2ee62e" stroke-width="3"/><line x1="228" y1="250" x2="228" y2="600" stroke="#e020e0" stroke-width="1.2"/><line x1="173.5" y1="249" x2="173.5" y2="278" stroke="#2ee62e" stroke-width="2.5"/><line x1="143" y1="278" x2="166" y2="278" stroke="#2ee62e" stroke-width="1.5"/><line x1="143" y1="345.5" x2="185" y2="345.5" stroke="#f4f4f4" stroke-width="2.5"/><line x1="180" y1="345" x2="180" y2="402" stroke="#f4f4f4" stroke-width="2.5"/><line x1="180" y1="420" x2="180" y2="462" stroke="#f4f4f4" stroke-width="2.5"/><line x1="180" y1="470" x2="180" y2="546" stroke="#f4f4f4" stroke-width="2"/><line x1="143" y1="392.5" x2="181" y2="392.5" stroke="#2ee62e" stroke-width="2"/><line x1="141" y1="414.5" x2="193" y2="414.5" stroke="#e020e0" stroke-width="3"/><line x1="139" y1="418.5" x2="193" y2="418.5" stroke="#f4f4f4" stroke-width="2.5"/><line x1="143" y1="471" x2="180" y2="471" stroke="#2ee62e" stroke-width="1.5"/><line x1="143" y1="507.5" x2="180" y2="507.5" stroke="#f4f4f4" stroke-width="2.5"/><line x1="141" y1="546" x2="230" y2="546" stroke="#e020e0" stroke-width="3"/><line x1="143" y1="544" x2="230" y2="544" stroke="#f4f4f4" stroke-width="1.5"/><line x1="143" y1="578.5" x2="172" y2="578.5" stroke="#2ee62e" stroke-width="2"/><line x1="172.5" y1="580" x2="172.5" y2="610" stroke="#2ee62e" stroke-width="1.5"/><line x1="195" y1="278" x2="195" y2="371" stroke="#f4f4f4" stroke-width="3.7"/><line x1="207" y1="279.5" x2="228" y2="279.5" stroke="#f4f4f4" stroke-width="2.5"/><line x1="197" y1="313" x2="228" y2="313" stroke="#f4f4f4" stroke-width="2"/><line x1="207" y1="344.5" x2="227" y2="344.5" stroke="#2ee62e" stroke-width="1.5"/><line x1="193" y1="377.5" x2="228.6" y2="377.5" stroke="#e020e0" stroke-width="2.5"/><line x1="193" y1="380.5" x2="232" y2="380.5" stroke="#f4f4f4" stroke-width="2"/><line x1="193.5" y1="377" x2="193.5" y2="436" stroke="#e020e0" stroke-width="3"/><line x1="195.5" y1="380" x2="195.5" y2="418" stroke="#f4f4f4" stroke-width="3.7"/><line x1="195" y1="416.5" x2="232" y2="416.5" stroke="#f4f4f4" stroke-width="2"/><line x1="194" y1="485" x2="194" y2="533" stroke="#f4f4f4" stroke-width="2"/><line x1="195" y1="507" x2="226" y2="507" stroke="#f4f4f4" stroke-width="2"/><line x1="195" y1="505" x2="226" y2="505" stroke="#e020e0" stroke-width="1.2"/><line x1="179" y1="516" x2="179" y2="545" stroke="#f4f4f4" stroke-width="2"/><rect x="193.5" y="574" width="5" height="6" fill="#f4f4f4"/><rect x="199" y="383.2" width="31" height="3.6" fill="#1c1cf0"/><rect x="183" y="422.2" width="9" height="3.6" fill="#1c1cf0"/><rect x="149" y="288.5" width="27" height="3.6" fill="#1c1cf0"/><rect x="199.7" y="289.0" width="18.0" height="3.6" fill="#1c1cf0"/><rect x="200" y="291.2" width="16" height="3.6" fill="#1c1cf0"/><rect x="198.5" y="317.2" width="3.5" height="3.6" fill="#1c1cf0"/><rect x="143" y="441.0" width="45" height="3.6" fill="#1c1cf0"/><rect x="143" y="516.8000000000001" width="32.69999999999999" height="3.6" fill="#1c1cf0"/><rect x="198.5" y="515.6" width="27.5" height="3.6" fill="#1c1cf0"/><rect x="168.5" y="554.0" width="27.5" height="3.6" fill="#1c1cf0"/><rect x="145" y="357.2" width="27" height="3.6" fill="#1c1cf0"/><rect x="145" y="395.2" width="5" height="3.6" fill="#1c1cf0"/><rect x="143.5" y="250" width="5" height="3.5" fill="none" stroke="#e020e0" stroke-width="1.2"/><rect x="143.5" y="254" width="5" height="3.5" fill="none" stroke="#e020e0" stroke-width="1.2"/><rect x="143.5" y="296" width="5" height="3.5" fill="none" stroke="#e020e0" stroke-width="1.2"/><rect x="143.5" y="300" width="5" height="3.5" fill="none" stroke="#e020e0" stroke-width="1.2"/><rect x="143.5" y="334" width="5" height="3.5" fill="none" stroke="#e020e0" stroke-width="1.2"/><rect x="143.5" y="338" width="5" height="3.5" fill="none" stroke="#e020e0" stroke-width="1.2"/><rect x="143.5" y="380" width="5" height="3.5" fill="none" stroke="#e020e0" stroke-width="1.2"/><rect x="143.5" y="384" width="5" height="3.5" fill="none" stroke="#e020e0" stroke-width="1.2"/><rect x="143.5" y="431" width="5" height="3.5" fill="none" stroke="#e020e0" stroke-width="1.2"/><rect x="143.5" y="435" width="5" height="3.5" fill="none" stroke="#e020e0" stroke-width="1.2"/><rect x="143.5" y="466" width="5" height="3.5" fill="none" stroke="#e020e0" stroke-width="1.2"/><rect x="143.5" y="470" width="5" height="3.5" fill="none" stroke="#e020e0" stroke-width="1.2"/><rect x="143.5" y="499" width="5" height="3.5" fill="none" stroke="#e020e0" stroke-width="1.2"/><rect x="143.5" y="503" width="5" height="3.5" fill="none" stroke="#e020e0" stroke-width="1.2"/><rect x="143.5" y="535" width="5" height="3.5" fill="none" stroke="#e020e0" stroke-width="1.2"/><rect x="143.5" y="539" width="5" height="3.5" fill="none" stroke="#e020e0" stroke-width="1.2"/><rect x="143.5" y="576" width="5" height="3.5" fill="none" stroke="#e020e0" stroke-width="1.2"/><rect x="143.5" y="580" width="5" height="3.5" fill="none" stroke="#e020e0" stroke-width="1.2"/><rect x="143.5" y="598" width="5" height="3.5" fill="none" stroke="#e020e0" stroke-width="1.2"/><rect x="143.5" y="602" width="5" height="3.5" fill="none" stroke="#e020e0" stroke-width="1.2"/><rect x="221.5" y="254" width="5" height="3.5" fill="none" stroke="#e020e0" stroke-width="1.2"/><rect x="221.5" y="258" width="5" height="3.5" fill="none" stroke="#e020e0" stroke-width="1.2"/><rect x="219.5" y="316" width="5" height="3.5" fill="none" stroke="#e020e0" stroke-width="1.2"/><rect x="219.5" y="320" width="5" height="3.5" fill="none" stroke="#e020e0" stroke-width="1.2"/><rect x="218.5" y="377" width="5" height="3.5" fill="none" stroke="#e020e0" stroke-width="1.2"/><rect x="218.5" y="381" width="5" height="3.5" fill="none" stroke="#e020e0" stroke-width="1.2"/><rect x="221.5" y="516" width="5" height="3.5" fill="none" stroke="#e020e0" stroke-width="1.2"/><rect x="221.5" y="520" width="5" height="3.5" fill="none" stroke="#e020e0" stroke-width="1.2"/><rect x="221.5" y="551" width="5" height="3.5" fill="none" stroke="#e020e0" stroke-width="1.2"/><rect x="221.5" y="555" width="5" height="3.5" fill="none" stroke="#e020e0" stroke-width="1.2"/><rect x="221.5" y="576" width="5" height="3.5" fill="none" stroke="#e020e0" stroke-width="1.2"/><rect x="221.5" y="580" width="5" height="3.5" fill="none" stroke="#e020e0" stroke-width="1.2"/><rect x="221.5" y="596" width="5" height="3.5" fill="none" stroke="#e020e0" stroke-width="1.2"/><rect x="221.5" y="600" width="5" height="3.5" fill="none" stroke="#e020e0" stroke-width="1.2"/><line x1="232" y1="287.5" x2="282" y2="287.5" stroke="#f4f4f4" stroke-width="1.2"/><line x1="232" y1="291.5" x2="282" y2="291.5" stroke="#f4f4f4" stroke-width="1.2"/><line x1="232" y1="295.5" x2="282" y2="295.5" stroke="#f4f4f4" stroke-width="1.2"/><line x1="232" y1="299.5" x2="282" y2="299.5" stroke="#f4f4f4" stroke-width="1.2"/><line x1="232" y1="303.5" x2="282" y2="303.5" stroke="#f4f4f4" stroke-width="1.2"/><line x1="232" y1="307" x2="282" y2="307" stroke="#f4f4f4" stroke-width="1.2"/><line x1="280" y1="285.5" x2="320" y2="285.5" stroke="#2ee62e" stroke-width="2.5"/><line x1="280" y1="285.5" x2="298" y2="285.5" stroke="#f4f4f4" stroke-width="3"/><line x1="282.6" y1="289" x2="322" y2="289" stroke="#e020e0" stroke-width="2.5"/><line x1="281.4" y1="284" x2="281.4" y2="349" stroke="#f4f4f4" stroke-width="3.7"/><line x1="281.4" y1="296" x2="281.4" y2="303" stroke="#2ee62e" stroke-width="3"/><line x1="281.4" y1="325" x2="281.4" y2="333" stroke="#2ee62e" stroke-width="3"/><line x1="317.5" y1="284" x2="317.5" y2="381" stroke="#f4f4f4" stroke-width="3.2"/><line x1="285" y1="313.8" x2="305.5" y2="313.8" stroke="#2ee62e" stroke-width="1.5"/><line x1="314" y1="305" x2="314" y2="314" stroke="#2ee62e" stroke-width="1.5"/><line x1="321" y1="288" x2="321" y2="436" stroke="#e020e0" stroke-width="2"/><line x1="233" y1="344.4" x2="280" y2="344.4" stroke="#2ee62e" stroke-width="2"/><line x1="232" y1="380.5" x2="320" y2="380.5" stroke="#f4f4f4" stroke-width="2.5"/><line x1="296" y1="379" x2="320" y2="379" stroke="#e020e0" stroke-width="1.5"/><line x1="233" y1="384" x2="320" y2="384" stroke="#2ee62e" stroke-width="1.5"/><line x1="233" y1="415" x2="320" y2="415" stroke="#2ee62e" stroke-width="1.5"/><line x1="233.4" y1="384" x2="233.4" y2="415" stroke="#2ee62e" stroke-width="2"/><line x1="281.4" y1="384" x2="281.4" y2="415" stroke="#2ee62e" stroke-width="2"/><line x1="317.5" y1="384" x2="317.5" y2="415" stroke="#2ee62e" stroke-width="2"/><rect x="230.5" y="378" width="5" height="5" fill="#f4f4f4"/><rect x="230.5" y="414" width="5" height="5" fill="#f4f4f4"/><rect x="278.5" y="378" width="5" height="5" fill="#f4f4f4"/><rect x="278.5" y="414" width="5" height="5" fill="#f4f4f4"/><rect x="314.5" y="378" width="5" height="5" fill="#f4f4f4"/><rect x="314.5" y="414" width="5" height="5" fill="#f4f4f4"/><line x1="195" y1="417.5" x2="320" y2="417.5" stroke="#f4f4f4" stroke-width="2"/><rect x="251.4" y="354.59999999999997" width="27.599999999999994" height="3.6" fill="#1c1cf0"/><rect x="250" y="400.7" width="22" height="3.6" fill="#1c1cf0"/><rect x="251" y="418.2" width="12" height="3.6" fill="#1c1cf0"/><rect x="320" y="388.2" width="9.5" height="3.6" fill="#1c1cf0"/><rect x="290" y="290.9" width="6" height="3.6" fill="#1c1cf0"/><rect x="223.5" y="433" width="5" height="3.5" fill="none" stroke="#e020e0" stroke-width="1.2"/><rect x="223.5" y="437" width="5" height="3.5" fill="none" stroke="#e020e0" stroke-width="1.2"/><rect x="297.5" y="371" width="5" height="3.5" fill="none" stroke="#e020e0" stroke-width="1.2"/><rect x="297.5" y="375" width="5" height="3.5" fill="none" stroke="#e020e0" stroke-width="1.2"/><line x1="320" y1="284.5" x2="377" y2="284.5" stroke="#2ee62e" stroke-width="2.5"/><line x1="358" y1="284.5" x2="377" y2="284.5" stroke="#f4f4f4" stroke-width="3"/><line x1="346.5" y1="287" x2="346.5" y2="316" stroke="#2ee62e" stroke-width="2.5"/><line x1="355" y1="315.5" x2="373" y2="315.5" stroke="#2ee62e" stroke-width="2"/><line x1="374" y1="290" x2="374" y2="380" stroke="#e020e0" stroke-width="2"/><line x1="377" y1="285" x2="377" y2="381" stroke="#f4f4f4" stroke-width="3.7"/><line x1="377" y1="300" x2="377" y2="320" stroke="#2ee62e" stroke-width="3"/><line x1="320" y1="343" x2="334" y2="343" stroke="#e020e0" stroke-width="2"/><line x1="334" y1="343" x2="334" y2="384" stroke="#e020e0" stroke-width="2"/><line x1="335.5" y1="345" x2="335.5" y2="383" stroke="#f4f4f4" stroke-width="2"/><line x1="334" y1="383.5" x2="465" y2="383.5" stroke="#f4f4f4" stroke-width="3"/><line x1="334" y1="384" x2="334" y2="416" stroke="#2ee62e" stroke-width="2"/><line x1="334" y1="416.5" x2="420" y2="416.5" stroke="#2ee62e" stroke-width="2"/><line x1="376" y1="384" x2="376" y2="416" stroke="#f4f4f4" stroke-width="2"/><rect x="336" y="325.2" width="25" height="3.6" fill="#1c1cf0"/><rect x="350" y="400.2" width="20" height="3.6" fill="#1c1cf0"/><rect x="395" y="400.2" width="20" height="3.6" fill="#1c1cf0"/><rect x="388" y="358.2" width="15" height="3.6" fill="#1c1cf0"/><rect x="321.5" y="290" width="5" height="3.5" fill="none" stroke="#e020e0" stroke-width="1.2"/><rect x="321.5" y="294" width="5" height="3.5" fill="none" stroke="#e020e0" stroke-width="1.2"/><rect x="321.5" y="312" width="5" height="3.5" fill="none" stroke="#e020e0" stroke-width="1.2"/><rect x="321.5" y="316" width="5" height="3.5" fill="none" stroke="#e020e0" stroke-width="1.2"/><rect x="370.5" y="350" width="5" height="3.5" fill="none" stroke="#e020e0" stroke-width="1.2"/><rect x="370.5" y="354" width="5" height="3.5" fill="none" stroke="#e020e0" stroke-width="1.2"/><rect x="370.5" y="370" width="5" height="3.5" fill="none" stroke="#e020e0" stroke-width="1.2"/><rect x="370.5" y="374" width="5" height="3.5" fill="none" stroke="#e020e0" stroke-width="1.2"/><rect x="373.5" y="271.5" width="54" height="30" fill="none" stroke="#f4f4f4" stroke-width="1.2"/><line x1="377" y1="275" x2="422" y2="275" stroke="#f4f4f4" stroke-width="1"/><line x1="377" y1="279" x2="422" y2="279" stroke="#f4f4f4" stroke-width="1"/><line x1="377" y1="283" x2="422" y2="283" stroke="#f4f4f4" stroke-width="1"/><line x1="377" y1="287" x2="422" y2="287" stroke="#f4f4f4" stroke-width="1"/><line x1="377" y1="291" x2="422" y2="291" stroke="#f4f4f4" stroke-width="1"/><line x1="377" y1="295" x2="422" y2="295" stroke="#f4f4f4" stroke-width="1"/><line x1="377" y1="299" x2="422" y2="299" stroke="#f4f4f4" stroke-width="1"/><line x1="427" y1="271" x2="427" y2="347" stroke="#f4f4f4" stroke-width="1.5"/><rect x="421" y="296" width="4" height="4" fill="none" stroke="#f4f4f4" stroke-width="1"/><line x1="427.5" y1="324" x2="427.5" y2="350" stroke="#f4f4f4" stroke-width="3.5"/><line x1="427.5" y1="343" x2="427.5" y2="346" stroke="#2ee62e" stroke-width="3"/><line x1="427.5" y1="357" x2="427.5" y2="371" stroke="#f4f4f4" stroke-width="3.7"/><line x1="378.5" y1="343" x2="425" y2="343" stroke="#2ee62e" stroke-width="2"/><line x1="429" y1="325" x2="522" y2="325" stroke="#2ee62e" stroke-width="3.2"/><line x1="521" y1="325" x2="521" y2="350" stroke="#f4f4f4" stroke-width="3.5"/><line x1="521" y1="350" x2="521" y2="568" stroke="#f4f4f4" stroke-width="3.7"/><line x1="521" y1="359" x2="521" y2="368" stroke="#2ee62e" stroke-width="3"/><line x1="521" y1="395" x2="521" y2="405" stroke="#2ee62e" stroke-width="3"/><line x1="521" y1="430" x2="521" y2="445" stroke="#2ee62e" stroke-width="3"/><line x1="521" y1="520" x2="521" y2="545" stroke="#2ee62e" stroke-width="3"/><line x1="464.2" y1="325" x2="464.2" y2="357" stroke="#f4f4f4" stroke-width="3"/><line x1="466.4" y1="327" x2="466.4" y2="547" stroke="#e020e0" stroke-width="2.5"/><line x1="400" y1="383.5" x2="520" y2="383.5" stroke="#f4f4f4" stroke-width="2.5"/><line x1="476.5" y1="380.5" x2="517" y2="380.5" stroke="#e020e0" stroke-width="2.5"/><line x1="476.5" y1="366" x2="476.5" y2="382" stroke="#e020e0" stroke-width="2"/><line x1="479" y1="366" x2="479" y2="374" stroke="#f4f4f4" stroke-width="2"/><line x1="467.6" y1="366" x2="479" y2="366" stroke="#f4f4f4" stroke-width="2"/><line x1="437" y1="366" x2="464" y2="366" stroke="#2ee62e" stroke-width="2"/><line x1="428.5" y1="383.7" x2="428.5" y2="416.5" stroke="#f4f4f4" stroke-width="2.5"/><line x1="428.5" y1="395" x2="428.5" y2="405" stroke="#2ee62e" stroke-width="3"/><line x1="431" y1="414.5" x2="466" y2="414.5" stroke="#e020e0" stroke-width="2"/><line x1="420" y1="417.5" x2="466" y2="417.5" stroke="#f4f4f4" stroke-width="2.5"/><line x1="478" y1="417.7" x2="517" y2="417.7" stroke="#f4f4f4" stroke-width="2"/><line x1="479" y1="385" x2="479" y2="410" stroke="#2ee62e" stroke-width="1.5"/><line x1="190" y1="435.5" x2="467.6" y2="435.5" stroke="#e020e0" stroke-width="4"/><rect x="433" y="330.8" width="16" height="3.6" fill="#1c1cf0"/><rect x="476" y="344.2" width="19" height="3.6" fill="#1c1cf0"/><rect x="487" y="389.2" width="18" height="3.6" fill="#1c1cf0"/><rect x="436" y="384.2" width="19" height="3.6" fill="#1c1cf0"/><rect x="485" y="432.7" width="32" height="3.6" fill="#1c1cf0"/><rect x="513.1" y="369.6" width="5" height="3.5" fill="none" stroke="#e020e0" stroke-width="1.2"/><rect x="513.1" y="373.6" width="5" height="3.5" fill="none" stroke="#e020e0" stroke-width="1.2"/><rect x="513.1" y="384.7" width="5" height="3.5" fill="none" stroke="#e020e0" stroke-width="1.2"/><rect x="513.1" y="388.7" width="5" height="3.5" fill="none" stroke="#e020e0" stroke-width="1.2"/><rect x="467.5" y="329" width="5" height="3.5" fill="none" stroke="#e020e0" stroke-width="1.2"/><rect x="467.5" y="333" width="5" height="3.5" fill="none" stroke="#e020e0" stroke-width="1.2"/><rect x="427.5" y="386" width="5" height="3.5" fill="none" stroke="#e020e0" stroke-width="1.2"/><rect x="427.5" y="390" width="5" height="3.5" fill="none" stroke="#e020e0" stroke-width="1.2"/><rect x="512.5" y="441" width="5" height="3.5" fill="none" stroke="#e020e0" stroke-width="1.2"/><rect x="512.5" y="445" width="5" height="3.5" fill="none" stroke="#e020e0" stroke-width="1.2"/><rect x="512.5" y="466" width="5" height="3.5" fill="none" stroke="#e020e0" stroke-width="1.2"/><rect x="512.5" y="470" width="5" height="3.5" fill="none" stroke="#e020e0" stroke-width="1.2"/><rect x="512.5" y="496" width="5" height="3.5" fill="none" stroke="#e020e0" stroke-width="1.2"/><rect x="512.5" y="500" width="5" height="3.5" fill="none" stroke="#e020e0" stroke-width="1.2"/><rect x="512.5" y="526" width="5" height="3.5" fill="none" stroke="#e020e0" stroke-width="1.2"/><rect x="512.5" y="530" width="5" height="3.5" fill="none" stroke="#e020e0" stroke-width="1.2"/><line x1="422" y1="439.5" x2="466" y2="439.5" stroke="#f4f4f4" stroke-width="2.5"/><line x1="427.5" y1="443" x2="427.5" y2="474" stroke="#f4f4f4" stroke-width="3.7"/><line x1="423" y1="476" x2="423" y2="507" stroke="#2ee62e" stroke-width="2"/><line x1="464.5" y1="440" x2="464.5" y2="464" stroke="#f4f4f4" stroke-width="2.5"/><line x1="464.5" y1="472" x2="464.5" y2="497" stroke="#f4f4f4" stroke-width="2.5"/><line x1="433" y1="506.5" x2="466" y2="506.5" stroke="#f4f4f4" stroke-width="2"/><line x1="479" y1="430" x2="479" y2="475.4" stroke="#f4f4f4" stroke-width="2"/><line x1="479" y1="480" x2="479" y2="531" stroke="#2ee62e" stroke-width="2"/><line x1="431" y1="475.4" x2="464" y2="475.4" stroke="#2ee62e" stroke-width="2"/><line x1="479" y1="475.4" x2="519.4" y2="475.4" stroke="#2ee62e" stroke-width="2"/><line x1="486.6" y1="532" x2="517" y2="532" stroke="#2ee62e" stroke-width="2"/><line x1="375.5" y1="508" x2="466" y2="508" stroke="#f4f4f4" stroke-width="2"/><line x1="400" y1="510" x2="466" y2="510" stroke="#e020e0" stroke-width="2"/><line x1="469" y1="508" x2="519.4" y2="508" stroke="#e020e0" stroke-width="2"/><line x1="407" y1="516" x2="407" y2="545" stroke="#f4f4f4" stroke-width="2"/><line x1="378" y1="545" x2="423.5" y2="545" stroke="#2ee62e" stroke-width="2"/><rect x="424" y="540" width="4" height="27" fill="none" stroke="#f4f4f4" stroke-width="2"/><line x1="427" y1="567.5" x2="520.6" y2="567.5" stroke="#2ee62e" stroke-width="2"/><line x1="431" y1="546" x2="466" y2="546" stroke="#e020e0" stroke-width="2"/><rect x="431" y="458.2" width="20" height="3.6" fill="#1c1cf0"/><rect x="431" y="476.2" width="20" height="3.6" fill="#1c1cf0"/><rect x="382" y="514.2" width="20" height="3.6" fill="#1c1cf0"/><rect x="426" y="517.8000000000001" width="20" height="3.6" fill="#1c1cf0"/><rect x="481.5" y="483.7" width="10.100000000000023" height="3.6" fill="#1c1cf0"/><rect x="481" y="510.2" width="10.600000000000023" height="3.6" fill="#1c1cf0"/><rect x="478" y="544.2" width="16" height="3.6" fill="#1c1cf0"/><rect x="431" y="560.7" width="29" height="3.6" fill="#1c1cf0"/><rect x="334" y="551.9000000000001" width="25" height="3.6" fill="#1c1cf0"/><rect x="344" y="447.2" width="16" height="3.6" fill="#1c1cf0"/><rect x="300" y="455.8" width="28" height="3.6" fill="#1c1cf0"/><rect x="341.5" y="522.8000000000001" width="17.5" height="3.6" fill="#1c1cf0"/><rect x="429.5" y="449" width="5" height="3.5" fill="none" stroke="#e020e0" stroke-width="1.2"/><rect x="429.5" y="453" width="5" height="3.5" fill="none" stroke="#e020e0" stroke-width="1.2"/><rect x="437.5" y="551" width="5" height="3.5" fill="none" stroke="#e020e0" stroke-width="1.2"/><rect x="437.5" y="555" width="5" height="3.5" fill="none" stroke="#e020e0" stroke-width="1.2"/><rect x="450.5" y="541" width="5" height="3.5" fill="none" stroke="#e020e0" stroke-width="1.2"/><rect x="450.5" y="545" width="5" height="3.5" fill="none" stroke="#e020e0" stroke-width="1.2"/><rect x="477.5" y="544" width="5" height="3.5" fill="none" stroke="#e020e0" stroke-width="1.2"/><rect x="477.5" y="548" width="5" height="3.5" fill="none" stroke="#e020e0" stroke-width="1.2"/><rect x="497.5" y="536" width="5" height="3.5" fill="none" stroke="#e020e0" stroke-width="1.2"/><rect x="497.5" y="540" width="5" height="3.5" fill="none" stroke="#e020e0" stroke-width="1.2"/><rect x="356.6" y="440" width="74.4" height="68" fill="none" stroke="#f4f4f4" stroke-width="2"/><line x1="356.6" y1="442.6" x2="380.6" y2="442.6" stroke="#e020e0" stroke-width="2.5"/><circle cx="380.6" cy="446.4" r="2.5" fill="#e81818"/><line x1="384" y1="441" x2="421" y2="441" stroke="#f4f4f4" stroke-width="1"/><line x1="384" y1="445" x2="421" y2="445" stroke="#f4f4f4" stroke-width="1"/><line x1="384" y1="449" x2="421" y2="449" stroke="#f4f4f4" stroke-width="1"/><line x1="384" y1="453" x2="421" y2="453" stroke="#f4f4f4" stroke-width="1"/><line x1="384" y1="457" x2="421" y2="457" stroke="#f4f4f4" stroke-width="1"/><line x1="384" y1="461" x2="421" y2="461" stroke="#f4f4f4" stroke-width="1"/><line x1="384" y1="464" x2="421" y2="464" stroke="#f4f4f4" stroke-width="1"/><line x1="402" y1="440" x2="402" y2="464" stroke="#f4f4f4" stroke-width="1"/><path d="M391 464 A11.4 11.4 0 0 0 413 464" fill="none" stroke="#f4f4f4" stroke-width="1"/><path d="M384 474 Q402 490 421 474" fill="none" stroke="#2ee62e" stroke-width="1.2"/><path d="M386 471 Q402 484 419 471" fill="none" stroke="#2ee62e" stroke-width="1"/><line x1="378" y1="440" x2="378" y2="508" stroke="#f4f4f4" stroke-width="2"/><line x1="423.5" y1="440" x2="423.5" y2="508" stroke="#f4f4f4" stroke-width="2"/><line x1="378" y1="455" x2="378" y2="470" stroke="#2ee62e" stroke-width="3"/><line x1="423.5" y1="480" x2="423.5" y2="500" stroke="#2ee62e" stroke-width="3"/><line x1="346.5" y1="461" x2="346.5" y2="488" stroke="#f4f4f4" stroke-width="2"/><line x1="346.5" y1="491" x2="346.5" y2="506" stroke="#f4f4f4" stroke-width="2"/><line x1="356.6" y1="461" x2="356.6" y2="488" stroke="#f4f4f4" stroke-width="2"/><line x1="356.6" y1="491" x2="356.6" y2="506" stroke="#f4f4f4" stroke-width="2"/><line x1="366.7" y1="461" x2="366.7" y2="488" stroke="#f4f4f4" stroke-width="2"/><line x1="366.7" y1="491" x2="366.7" y2="506" stroke="#f4f4f4" stroke-width="2"/><line x1="335" y1="489" x2="374" y2="489" stroke="#f4f4f4" stroke-width="2"/><line x1="335" y1="460" x2="365" y2="460" stroke="#2ee62e" stroke-width="2"/><line x1="335" y1="517" x2="365" y2="517" stroke="#f4f4f4" stroke-width="2"/><line x1="335" y1="444" x2="335" y2="545" stroke="#f4f4f4" stroke-width="4.2"/><line x1="320" y1="436" x2="320" y2="542" stroke="#e020e0" stroke-width="2"/><line x1="320" y1="542" x2="373" y2="542" stroke="#e020e0" stroke-width="2"/><line x1="320" y1="545" x2="375.5" y2="545" stroke="#f4f4f4" stroke-width="2"/><line x1="375.5" y1="508" x2="375.5" y2="591.5" stroke="#f4f4f4" stroke-width="2"/><line x1="374" y1="546" x2="374" y2="584" stroke="#e020e0" stroke-width="2"/><line x1="320" y1="589" x2="375.5" y2="589" stroke="#2ee62e" stroke-width="2"/><line x1="370" y1="585" x2="376" y2="592" stroke="#f4f4f4" stroke-width="3"/><rect x="321.5" y="556" width="5" height="3.5" fill="none" stroke="#e020e0" stroke-width="1.2"/><rect x="321.5" y="560" width="5" height="3.5" fill="none" stroke="#e020e0" stroke-width="1.2"/><rect x="367.5" y="571" width="5" height="3.5" fill="none" stroke="#e020e0" stroke-width="1.2"/><rect x="367.5" y="575" width="5" height="3.5" fill="none" stroke="#e020e0" stroke-width="1.2"/><line x1="190" y1="435.6" x2="190" y2="477.7" stroke="#e020e0" stroke-width="4"/><line x1="190" y1="477.7" x2="228.5" y2="477.7" stroke="#e020e0" stroke-width="4"/><rect x="195" y="440" width="42" height="31.7" fill="none" stroke="#f4f4f4" stroke-width="2.5"/><line x1="239" y1="441" x2="274" y2="441" stroke="#f4f4f4" stroke-width="1"/><line x1="239" y1="445" x2="274" y2="445" stroke="#f4f4f4" stroke-width="1"/><line x1="239" y1="449" x2="274" y2="449" stroke="#f4f4f4" stroke-width="1"/><line x1="239" y1="453" x2="274" y2="453" stroke="#f4f4f4" stroke-width="1"/><line x1="239" y1="457" x2="274" y2="457" stroke="#f4f4f4" stroke-width="1"/><line x1="239" y1="461" x2="274" y2="461" stroke="#f4f4f4" stroke-width="1"/><line x1="239" y1="464" x2="274" y2="464" stroke="#f4f4f4" stroke-width="1"/><line x1="256" y1="440" x2="256" y2="464" stroke="#f4f4f4" stroke-width="1"/><path d="M245 464 A11 11 0 0 0 267 464" fill="none" stroke="#f4f4f4" stroke-width="1"/><path d="M238 474 Q256 492 275 474" fill="none" stroke="#2ee62e" stroke-width="1.2"/><path d="M240 471 Q256 486 272 471" fill="none" stroke="#2ee62e" stroke-width="1"/><rect x="278" y="440" width="20" height="19.7" fill="none" stroke="#f4f4f4" stroke-width="2"/><rect x="282" y="444" width="12" height="12" fill="none" stroke="#2ee62e" stroke-width="1.5"/><line x1="274" y1="472.5" x2="320" y2="472.5" stroke="#f4f4f4" stroke-width="2.5"/><line x1="282" y1="475" x2="320" y2="475" stroke="#e020e0" stroke-width="2"/><line x1="277.5" y1="440" x2="277.5" y2="472" stroke="#f4f4f4" stroke-width="2.5"/><line x1="282.5" y1="474" x2="282.5" y2="507" stroke="#f4f4f4" stroke-width="3.7"/><line x1="282.5" y1="485" x2="282.5" y2="495" stroke="#2ee62e" stroke-width="3"/><line x1="318" y1="440" x2="318" y2="545" stroke="#f4f4f4" stroke-width="3.7"/><rect x="315.5" y="505" width="5" height="5" fill="#f4f4f4"/><line x1="284" y1="546.5" x2="318" y2="546.5" stroke="#e020e0" stroke-width="2"/><rect x="279" y="541" width="5" height="5" fill="#f4f4f4"/><line x1="228.6" y1="477.7" x2="228.6" y2="566.6" stroke="#f4f4f4" stroke-width="2"/><line x1="228.6" y1="506.5" x2="284" y2="506.5" stroke="#f4f4f4" stroke-width="2"/><line x1="231" y1="545" x2="281" y2="545" stroke="#2ee62e" stroke-width="2.5"/><line x1="258.6" y1="516" x2="258.6" y2="545" stroke="#2ee62e" stroke-width="2"/><line x1="281.4" y1="540" x2="281.4" y2="593" stroke="#f4f4f4" stroke-width="2.5"/><line x1="281" y1="590.7" x2="322" y2="590.7" stroke="#2ee62e" stroke-width="2.5"/><line x1="322" y1="436" x2="322" y2="593" stroke="#e020e0" stroke-width="2"/><line x1="232" y1="473" x2="232" y2="506" stroke="#f4f4f4" stroke-width="2"/><line x1="232" y1="440" x2="232" y2="470" stroke="#f4f4f4" stroke-width="2"/><rect x="198.5" y="451.8" width="30.099999999999994" height="3.6" fill="#1c1cf0"/><rect x="197" y="480.7" width="21" height="3.6" fill="#1c1cf0"/><rect x="274" y="516.8000000000001" width="23" height="3.6" fill="#1c1cf0"/><rect x="237" y="473.2" width="11" height="3.6" fill="#1c1cf0"/><rect x="287.5" y="473" width="5" height="3.5" fill="none" stroke="#e020e0" stroke-width="1.2"/><rect x="287.5" y="477" width="5" height="3.5" fill="none" stroke="#e020e0" stroke-width="1.2"/><rect x="315.5" y="496" width="5" height="3.5" fill="none" stroke="#e020e0" stroke-width="1.2"/><rect x="315.5" y="500" width="5" height="3.5" fill="none" stroke="#e020e0" stroke-width="1.2"/><rect x="315.5" y="556" width="5" height="3.5" fill="none" stroke="#e020e0" stroke-width="1.2"/><rect x="315.5" y="560" width="5" height="3.5" fill="none" stroke="#e020e0" stroke-width="1.2"/><rect x="315.5" y="576" width="5" height="3.5" fill="none" stroke="#e020e0" stroke-width="1.2"/><rect x="315.5" y="580" width="5" height="3.5" fill="none" stroke="#e020e0" stroke-width="1.2"/><rect x="233.5" y="526" width="5" height="3.5" fill="none" stroke="#e020e0" stroke-width="1.2"/><rect x="233.5" y="530" width="5" height="3.5" fill="none" stroke="#e020e0" stroke-width="1.2"/><rect x="233.5" y="576" width="5" height="3.5" fill="none" stroke="#e020e0" stroke-width="1.2"/><rect x="233.5" y="580" width="5" height="3.5" fill="none" stroke="#e020e0" stroke-width="1.2"/><line x1="230.5" y1="555" x2="230.5" y2="565" stroke="#2ee62e" stroke-width="3"/><line x1="230.5" y1="590" x2="230.5" y2="600" stroke="#2ee62e" stroke-width="3"/><rect x="136.5" y="243.5" width="5" height="5" fill="#f4f4f4"/><rect x="228.0" y="243.5" width="5" height="5" fill="#f4f4f4"/><rect x="136.5" y="342.5" width="5" height="5" fill="#f4f4f4"/><rect x="136.5" y="411.5" width="5" height="5" fill="#f4f4f4"/><rect x="136.5" y="504.5" width="5" height="5" fill="#f4f4f4"/><rect x="136.5" y="543.5" width="5" height="5" fill="#f4f4f4"/><rect x="136.5" y="608.5" width="5" height="5" fill="#f4f4f4"/><rect x="228.0" y="608.5" width="5" height="5" fill="#f4f4f4"/><rect x="228.0" y="543.5" width="5" height="5" fill="#f4f4f4"/><rect x="228.0" y="414.5" width="5" height="5" fill="#f4f4f4"/><rect x="228.0" y="377.5" width="5" height="5" fill="#f4f4f4"/><rect x="278.9" y="282.5" width="5" height="5" fill="#f4f4f4"/><rect x="315.0" y="282.5" width="5" height="5" fill="#f4f4f4"/><rect x="374.5" y="282.5" width="5" height="5" fill="#f4f4f4"/><rect x="424.5" y="344.5" width="5" height="5" fill="#f4f4f4"/><rect x="461.5" y="322.5" width="5" height="5" fill="#f4f4f4"/><rect x="518.5" y="322.5" width="5" height="5" fill="#f4f4f4"/><rect x="518.5" y="379.5" width="5" height="5" fill="#f4f4f4"/><rect x="518.5" y="414.5" width="5" height="5" fill="#f4f4f4"/><rect x="518.5" y="472.5" width="5" height="5" fill="#f4f4f4"/><rect x="518.5" y="505.5" width="5" height="5" fill="#f4f4f4"/><rect x="518.5" y="564.5" width="5" height="5" fill="#f4f4f4"/><rect x="426.0" y="380.5" width="5" height="5" fill="#f4f4f4"/><rect x="426.0" y="414.5" width="5" height="5" fill="#f4f4f4"/><rect x="373.0" y="505.5" width="5" height="5" fill="#f4f4f4"/><rect x="373.0" y="542.5" width="5" height="5" fill="#f4f4f4"/><rect x="373.0" y="588.5" width="5" height="5" fill="#f4f4f4"/><rect x="278.9" y="542.5" width="5" height="5" fill="#f4f4f4"/><rect x="278.9" y="588.5" width="5" height="5" fill="#f4f4f4"/><rect x="226.1" y="504.5" width="5" height="5" fill="#f4f4f4"/><rect x="226.1" y="542.5" width="5" height="5" fill="#f4f4f4"/><rect x="375.5" y="437.5" width="5" height="5" fill="#f4f4f4"/><rect x="421.0" y="437.5" width="5" height="5" fill="#f4f4f4"/><rect x="421.0" y="505.5" width="5" height="5" fill="#f4f4f4"/><rect x="375.5" y="505.5" width="5" height="5" fill="#f4f4f4"/><rect x="476.5" y="414.5" width="5" height="5" fill="#f4f4f4"/><rect x="476.5" y="472.5" width="5" height="5" fill="#f4f4f4"/><rect x="476.5" y="505.5" width="5" height="5" fill="#f4f4f4"/><rect x="425.5" y="564.5" width="5" height="5" fill="#f4f4f4"/><line x1="521" y1="441" x2="570" y2="441" stroke="#f4f4f4" stroke-width="1.2"/><line x1="521" y1="443.5" x2="570" y2="443.5" stroke="#f4f4f4" stroke-width="1"/><line x1="521" y1="472.7" x2="570" y2="472.7" stroke="#f4f4f4" stroke-width="1.2"/><line x1="521" y1="470" x2="570" y2="470" stroke="#f4f4f4" stroke-width="1"/><g shape-rendering="auto"><circle cx="656" cy="456" r="88" fill="none" stroke="#f4f4f4" stroke-width="1.1"/><circle cx="656" cy="456" r="85" fill="none" stroke="#f4f4f4" stroke-width="1.1"/><g transform="translate(656,456) rotate(44)"><line x1="-22" y1="105" x2="21" y2="105" stroke="#f4f4f4" stroke-width="2.2"/><line x1="-22" y1="63" x2="-22" y2="105" stroke="#f4f4f4" stroke-width="2.4"/><line x1="21" y1="63" x2="21" y2="105" stroke="#f4f4f4" stroke-width="2"/><line x1="-20" y1="103" x2="19" y2="103" stroke="#2ee62e" stroke-width="1.2"/><line x1="-60" y1="63" x2="61" y2="63" stroke="#f4f4f4" stroke-width="1.6"/><line x1="-85" y1="31" x2="59" y2="31" stroke="#f4f4f4" stroke-width="1.4"/><line x1="-88" y1="0" x2="-8" y2="0" stroke="#f4f4f4" stroke-width="1.4"/><line x1="3" y1="0" x2="60" y2="0" stroke="#f4f4f4" stroke-width="1.4"/><line x1="-82" y1="-33" x2="77" y2="-33" stroke="#f4f4f4" stroke-width="1.6"/><line x1="-63" y1="-60" x2="-22" y2="-60" stroke="#f4f4f4" stroke-width="1.4"/><line x1="21" y1="-60" x2="60" y2="-60" stroke="#f4f4f4" stroke-width="3"/><line x1="-23" y1="-82" x2="21" y2="-82" stroke="#f4f4f4" stroke-width="1.4"/><line x1="-20" y1="-33" x2="20" y2="-33" stroke="#f4f4f4" stroke-width="1.4"/><line x1="-62" y1="-58" x2="-62" y2="63" stroke="#f4f4f4" stroke-width="1.4"/><line x1="-22" y1="-81" x2="-22" y2="106" stroke="#f4f4f4" stroke-width="1.6"/><line x1="21" y1="-82" x2="21" y2="105" stroke="#f4f4f4" stroke-width="1.6"/><line x1="60" y1="-37" x2="60" y2="64" stroke="#f4f4f4" stroke-width="1.4"/><line x1="-74" y1="-50" x2="-74" y2="40" stroke="#2ee62e" stroke-width="0.8"/><line x1="74" y1="-30" x2="74" y2="40" stroke="#2ee62e" stroke-width="0.8"/><line x1="-62" y1="-45" x2="-62" y2="-38" stroke="#2ee62e" stroke-width="2.2"/><line x1="-62" y1="10" x2="-62" y2="22" stroke="#2ee62e" stroke-width="2.2"/><line x1="-62" y1="40" x2="-62" y2="52" stroke="#2ee62e" stroke-width="2.2"/><line x1="60" y1="-20" x2="60" y2="-8" stroke="#2ee62e" stroke-width="2.2"/><line x1="60" y1="40" x2="60" y2="52" stroke="#2ee62e" stroke-width="2.2"/><line x1="-22" y1="-70" x2="-22" y2="-60" stroke="#2ee62e" stroke-width="2.2"/><line x1="21" y1="70" x2="21" y2="90" stroke="#2ee62e" stroke-width="2.2"/><line x1="-40" y1="63" x2="-50" y2="63" stroke="#2ee62e" stroke-width="2.2"/><line x1="30" y1="31" x2="45" y2="31" stroke="#2ee62e" stroke-width="2.2"/><line x1="-50" y1="-33" x2="-35" y2="-33" stroke="#2ee62e" stroke-width="2.2"/><line x1="35" y1="-33" x2="50" y2="-33" stroke="#2ee62e" stroke-width="2.2"/><line x1="-15" y1="105" x2="10" y2="105" stroke="#2ee62e" stroke-width="2.2"/><line x1="-8" y1="-42" x2="-8" y2="68" stroke="#e020e0" stroke-width="1.6"/><line x1="3" y1="-42" x2="3" y2="68" stroke="#e020e0" stroke-width="1.6"/><line x1="-9.5" y1="-42" x2="-9.5" y2="68" stroke="#f4f4f4" stroke-width="0.8"/><line x1="4.5" y1="-42" x2="4.5" y2="68" stroke="#f4f4f4" stroke-width="0.8"/><rect x="-21" y="-1" width="13" height="21" fill="none" stroke="#f4f4f4" stroke-width="1.1"/><rect x="-19.5" y="0.5" width="10" height="18" fill="none" stroke="#e020e0" stroke-width="0.9"/><rect x="-21" y="-30" width="13" height="18" fill="none" stroke="#f4f4f4" stroke-width="1.1"/><rect x="-19.5" y="-28.5" width="10" height="15" fill="none" stroke="#e020e0" stroke-width="0.9"/><rect x="-21" y="10" width="13" height="18" fill="none" stroke="#f4f4f4" stroke-width="1.1"/><rect x="-19.5" y="11.5" width="10" height="15" fill="none" stroke="#e020e0" stroke-width="0.9"/><rect x="6" y="-28" width="15" height="20" fill="none" stroke="#f4f4f4" stroke-width="1.1"/><rect x="7.5" y="-26.5" width="12" height="17" fill="none" stroke="#e020e0" stroke-width="0.9"/><rect x="6" y="0" width="15" height="18" fill="none" stroke="#f4f4f4" stroke-width="1.1"/><rect x="7.5" y="1.5" width="12" height="15" fill="none" stroke="#e020e0" stroke-width="0.9"/><rect x="6" y="22" width="15" height="20" fill="none" stroke="#f4f4f4" stroke-width="1.1"/><rect x="7.5" y="23.5" width="12" height="17" fill="none" stroke="#e020e0" stroke-width="0.9"/><rect x="-21" y="40" width="13" height="18" fill="none" stroke="#f4f4f4" stroke-width="1.1"/><rect x="-19.5" y="41.5" width="10" height="15" fill="none" stroke="#e020e0" stroke-width="0.9"/><rect x="6" y="44" width="15" height="16" fill="none" stroke="#f4f4f4" stroke-width="1.1"/><rect x="7.5" y="45.5" width="12" height="13" fill="none" stroke="#e020e0" stroke-width="0.9"/><rect x="24" y="-58" width="33" height="20" fill="none" stroke="#f4f4f4" stroke-width="1"/><line x1="26.0" y1="-56" x2="26.0" y2="-49" stroke="#f4f4f4" stroke-width="1.6"/><line x1="26.0" y1="-47" x2="26.0" y2="-40" stroke="#f4f4f4" stroke-width="1.6"/><line x1="29.1" y1="-56" x2="29.1" y2="-49" stroke="#f4f4f4" stroke-width="1.6"/><line x1="29.1" y1="-47" x2="29.1" y2="-40" stroke="#f4f4f4" stroke-width="1.6"/><line x1="32.2" y1="-56" x2="32.2" y2="-49" stroke="#f4f4f4" stroke-width="1.6"/><line x1="32.2" y1="-47" x2="32.2" y2="-40" stroke="#f4f4f4" stroke-width="1.6"/><line x1="35.3" y1="-56" x2="35.3" y2="-49" stroke="#f4f4f4" stroke-width="1.6"/><line x1="35.3" y1="-47" x2="35.3" y2="-40" stroke="#f4f4f4" stroke-width="1.6"/><line x1="38.4" y1="-56" x2="38.4" y2="-49" stroke="#f4f4f4" stroke-width="1.6"/><line x1="38.4" y1="-47" x2="38.4" y2="-40" stroke="#f4f4f4" stroke-width="1.6"/><line x1="41.5" y1="-56" x2="41.5" y2="-49" stroke="#f4f4f4" stroke-width="1.6"/><line x1="41.5" y1="-47" x2="41.5" y2="-40" stroke="#f4f4f4" stroke-width="1.6"/><line x1="44.6" y1="-56" x2="44.6" y2="-49" stroke="#f4f4f4" stroke-width="1.6"/><line x1="44.6" y1="-47" x2="44.6" y2="-40" stroke="#f4f4f4" stroke-width="1.6"/><line x1="47.7" y1="-56" x2="47.7" y2="-49" stroke="#f4f4f4" stroke-width="1.6"/><line x1="47.7" y1="-47" x2="47.7" y2="-40" stroke="#f4f4f4" stroke-width="1.6"/><line x1="50.8" y1="-56" x2="50.8" y2="-49" stroke="#f4f4f4" stroke-width="1.6"/><line x1="50.8" y1="-47" x2="50.8" y2="-40" stroke="#f4f4f4" stroke-width="1.6"/><line x1="53.900000000000006" y1="-56" x2="53.900000000000006" y2="-49" stroke="#f4f4f4" stroke-width="1.6"/><line x1="53.900000000000006" y1="-47" x2="53.900000000000006" y2="-40" stroke="#f4f4f4" stroke-width="1.6"/><line x1="24" y1="-48" x2="57" y2="-48" stroke="#f4f4f4" stroke-width="0.8"/><rect x="-84.6" y="-35.6" width="5.2" height="5.2" fill="#f4f4f4" transform="rotate(45 -82 -33)"/><rect x="-65.6" y="-60.6" width="5.2" height="5.2" fill="#f4f4f4" transform="rotate(45 -63 -58)"/><rect x="-90.6" y="-3.6" width="5.2" height="5.2" fill="#f4f4f4" transform="rotate(45 -88 -1)"/><rect x="-64.6" y="-34.6" width="5.2" height="5.2" fill="#f4f4f4" transform="rotate(45 -62 -32)"/><rect x="-25.6" y="-37.6" width="5.2" height="5.2" fill="#f4f4f4" transform="rotate(45 -23 -35)"/><rect x="-85.6" y="30.4" width="5.2" height="5.2" fill="#f4f4f4" transform="rotate(45 -83 33)"/><rect x="-64.6" y="-2.6" width="5.2" height="5.2" fill="#f4f4f4" transform="rotate(45 -62 0)"/><rect x="-63.6" y="30.4" width="5.2" height="5.2" fill="#f4f4f4" transform="rotate(45 -61 33)"/><rect x="-62.6" y="60.4" width="5.2" height="5.2" fill="#f4f4f4" transform="rotate(45 -60 63)"/><rect x="-23.6" y="60.4" width="5.2" height="5.2" fill="#f4f4f4" transform="rotate(45 -21 63)"/><rect x="19.4" y="61.4" width="5.2" height="5.2" fill="#f4f4f4" transform="rotate(45 22 64)"/><rect x="58.4" y="57.4" width="5.2" height="5.2" fill="#f4f4f4" transform="rotate(45 61 60)"/><rect x="56.4" y="27.4" width="5.2" height="5.2" fill="#f4f4f4" transform="rotate(45 59 30)"/><rect x="80.4" y="25.4" width="5.2" height="5.2" fill="#f4f4f4" transform="rotate(45 83 28)"/><rect x="82.4" y="-7.6" width="5.2" height="5.2" fill="#f4f4f4" transform="rotate(45 85 -5)"/><rect x="57.4" y="-4.6" width="5.2" height="5.2" fill="#f4f4f4" transform="rotate(45 60 -2)"/><rect x="74.4" y="-39.6" width="5.2" height="5.2" fill="#f4f4f4" transform="rotate(45 77 -37)"/><rect x="18.4" y="-84.6" width="5.2" height="5.2" fill="#f4f4f4" transform="rotate(45 21 -82)"/><rect x="-25.6" y="-83.6" width="5.2" height="5.2" fill="#f4f4f4" transform="rotate(45 -23 -81)"/><rect x="-24.6" y="103.4" width="5.2" height="5.2" fill="#f4f4f4" transform="rotate(45 -22 106)"/><rect x="18.4" y="102.4" width="5.2" height="5.2" fill="#f4f4f4" transform="rotate(45 21 105)"/><rect x="-24.6" y="-2.6" width="5.2" height="5.2" fill="#f4f4f4" transform="rotate(45 -22 0)"/><rect x="18.4" y="-2.6" width="5.2" height="5.2" fill="#f4f4f4" transform="rotate(45 21 0)"/><rect x="-24.6" y="28.4" width="5.2" height="5.2" fill="#f4f4f4" transform="rotate(45 -22 31)"/><rect x="18.4" y="28.4" width="5.2" height="5.2" fill="#f4f4f4" transform="rotate(45 21 31)"/><rect x="18.4" y="-35.6" width="5.2" height="5.2" fill="#f4f4f4" transform="rotate(45 21 -33)"/><rect x="-24.6" y="-62.6" width="5.2" height="5.2" fill="#f4f4f4" transform="rotate(45 -22 -60)"/><rect x="18.4" y="-62.6" width="5.2" height="5.2" fill="#f4f4f4" transform="rotate(45 21 -60)"/></g><path d="M697 382.8 A86.5 86.5 0 0 1 729 412.5" fill="none" stroke="#2ee62e" stroke-width="2"/><rect x="644.4941767526833" y="382.3780771865722" width="11.418131993605847" height="3.2" fill="#1c1cf0"/><rect x="607.9561543731445" y="399.50527517698106" width="9.134505594884677" height="3.2" fill="#1c1cf0"/><rect x="629.6506051609956" y="399.50527517698106" width="7.992692395524093" height="3.2" fill="#1c1cf0"/><rect x="599.9634619776205" y="407.4979675725051" width="9.134505594884677" height="3.2" fill="#1c1cf0"/><rect x="607.9561543731445" y="422.34153916419274" width="5.709065996802924" height="3.2" fill="#1c1cf0"/><rect x="683.3158255309431" y="399.50527517698106" width="7.992692395524093" height="3.2" fill="#1c1cf0"/><rect x="580.5526375884905" y="448.6032427494862" width="6.8508791961635085" height="3.2" fill="#1c1cf0"/><rect x="570.2763187942453" y="470.2976935373373" width="11.418131993605847" height="3.2" fill="#1c1cf0"/><rect x="582.8362639872117" y="502.26846311943365" width="25.119890385932862" height="3.2" fill="#1c1cf0"/><rect x="617.0906599680293" y="529.6719799040877" width="11.418131993605847" height="3.2" fill="#1c1cf0"/><rect x="641.0687371546015" y="506.835715916876" width="7.992692395524093" height="3.2" fill="#1c1cf0"/><rect x="667.3304407398949" y="456.59593514501023" width="6.8508791961635085" height="3.2" fill="#1c1cf0"/><rect x="686.7412651290249" y="460.021374743092" width="7.992692395524093" height="3.2" fill="#1c1cf0"/><rect x="706.1520895181549" y="494.27577072390955" width="11.418131993605847" height="3.2" fill="#1c1cf0"/><rect x="697.0175839232702" y="502.26846311943365" width="9.134505594884677" height="3.2" fill="#1c1cf0"/><rect x="663.9050011418133" y="483.9994519296643" width="7.992692395524093" height="3.2" fill="#1c1cf0"/><rect x="655.9123087462891" y="463.44681434117376" width="6.8508791961635085" height="3.2" fill="#1c1cf0"/><rect x="639.9269239552409" y="463.44681434117376" width="5.709065996802924" height="3.2" fill="#1c1cf0"/></g><line x1="812.5" y1="417" x2="1130" y2="417" stroke="#2ee62e" stroke-width="1.2"/><line x1="812.5" y1="550.5" x2="1130" y2="550.5" stroke="#2ee62e" stroke-width="1.2"/><line x1="906.5" y1="417" x2="906.5" y2="683.5" stroke="#2ee62e" stroke-width="1.2"/><line x1="1000" y1="417" x2="1000" y2="683.5" stroke="#2ee62e" stroke-width="1.2"/><line x1="1130" y1="417" x2="1130" y2="683.5" stroke="#2ee62e" stroke-width="1.2"/><text x="862" y="430.5" fill="#e8e850" font-size="7.5" font-family="Liberation Serif" font-weight="bold" text-anchor="middle" textLength="48" lengthAdjust="spacingAndGlyphs">HİZMET BİNASI</text><text x="858.6" y="438" fill="#e8e850" font-size="7.5" font-family="Liberation Serif" font-weight="bold" text-anchor="middle" textLength="28" lengthAdjust="spacingAndGlyphs">TELEFON</text><text x="861" y="447.5" fill="#e8e850" font-size="7.5" font-family="Liberation Serif" font-weight="bold" text-anchor="middle" textLength="48" lengthAdjust="spacingAndGlyphs">KOLON ŞEMASI</text><text x="953.8" y="430.5" fill="#e8e850" font-size="7.5" font-family="Liberation Serif" font-weight="bold" text-anchor="middle" textLength="48" lengthAdjust="spacingAndGlyphs">HİZMET BİNASI</text><text x="954" y="437.5" fill="#e8e850" font-size="7.5" font-family="Liberation Serif" font-weight="bold" text-anchor="middle" textLength="42" lengthAdjust="spacingAndGlyphs">KABLOLU TV</text><text x="953" y="445.5" fill="#e8e850" font-size="7.5" font-family="Liberation Serif" font-weight="bold" text-anchor="middle" textLength="48" lengthAdjust="spacingAndGlyphs">KOLON ŞEMASI</text><text x="1066" y="430.5" fill="#e8e850" font-size="7.5" font-family="Liberation Serif" font-weight="bold" text-anchor="middle" textLength="49" lengthAdjust="spacingAndGlyphs">HİZMET BİNASI</text><text x="1017.5" y="443" fill="#e8e850" font-size="5" font-family="Liberation Serif" font-weight="bold" textLength="91" lengthAdjust="spacing">BİNA ANA GİRİŞ TERMİNAL KUTUSU</text><rect x="1018.3" y="450" width="59.2" height="82" fill="none" stroke="#e81818" stroke-width="1"/><line x1="1018.3" y1="454" x2="1077.5" y2="454" stroke="#e81818" stroke-width="1"/><line x1="1018.3" y1="527" x2="1077.5" y2="527" stroke="#e81818" stroke-width="1"/><rect x="1077.5" y="454" width="51" height="78" fill="none" stroke="#e81818" stroke-width="1"/><line x1="1129.5" y1="454" x2="1129.5" y2="532" stroke="#c8a020" stroke-width="1"/><rect x="1031" y="471" width="32.7" height="18.7" fill="#e81818"/><rect x="1033.0" y="475" width="2" height="2" fill="#f0d020"/><rect x="1033.0" y="483" width="2" height="2" fill="#f0d020"/><rect x="1036.8" y="475" width="2" height="2" fill="#f0d020"/><rect x="1036.8" y="483" width="2" height="2" fill="#f0d020"/><rect x="1040.6" y="475" width="2" height="2" fill="#f0d020"/><rect x="1040.6" y="483" width="2" height="2" fill="#f0d020"/><rect x="1044.4" y="475" width="2" height="2" fill="#f0d020"/><rect x="1044.4" y="483" width="2" height="2" fill="#f0d020"/><rect x="1048.2" y="475" width="2" height="2" fill="#f0d020"/><rect x="1048.2" y="483" width="2" height="2" fill="#f0d020"/><rect x="1052.0" y="475" width="2" height="2" fill="#f0d020"/><rect x="1052.0" y="483" width="2" height="2" fill="#f0d020"/><rect x="1055.8" y="475" width="2" height="2" fill="#f0d020"/><rect x="1055.8" y="483" width="2" height="2" fill="#f0d020"/><rect x="1059.6" y="475" width="2" height="2" fill="#f0d020"/><rect x="1059.6" y="483" width="2" height="2" fill="#f0d020"/><rect x="1031" y="497" width="32.7" height="18.7" fill="#e81818"/><rect x="1033.0" y="501" width="2" height="2" fill="#f0d020"/><rect x="1033.0" y="509" width="2" height="2" fill="#f0d020"/><rect x="1036.8" y="501" width="2" height="2" fill="#f0d020"/><rect x="1036.8" y="509" width="2" height="2" fill="#f0d020"/><rect x="1040.6" y="501" width="2" height="2" fill="#f0d020"/><rect x="1040.6" y="509" width="2" height="2" fill="#f0d020"/><rect x="1044.4" y="501" width="2" height="2" fill="#f0d020"/><rect x="1044.4" y="509" width="2" height="2" fill="#f0d020"/><rect x="1048.2" y="501" width="2" height="2" fill="#f0d020"/><rect x="1048.2" y="509" width="2" height="2" fill="#f0d020"/><rect x="1052.0" y="501" width="2" height="2" fill="#f0d020"/><rect x="1052.0" y="509" width="2" height="2" fill="#f0d020"/><rect x="1055.8" y="501" width="2" height="2" fill="#f0d020"/><rect x="1055.8" y="509" width="2" height="2" fill="#f0d020"/><rect x="1059.6" y="501" width="2" height="2" fill="#f0d020"/><rect x="1059.6" y="509" width="2" height="2" fill="#f0d020"/><rect x="1021.5" y="536.8" width="97.5" height="4.8" fill="#f0f000"/><rect x="1003" y="456.1" width="13" height="3" fill="#f0f000"/><rect x="1002" y="461.0" width="11" height="3" fill="#f0f000"/><rect x="1002" y="479.5" width="14" height="3" fill="#f0f000"/><rect x="1002" y="504.5" width="10" height="3" fill="#f0f000"/><rect x="1001" y="519.5" width="12" height="3" fill="#f0f000"/><polyline points="1016,457.6 1030,458" fill="none" stroke="#2ee62e" stroke-width="1"/><polyline points="1016,481 1024,481 1024,476 1031,476" fill="none" stroke="#2ee62e" stroke-width="1"/><polyline points="1024,481 1024,486 1031,486" fill="none" stroke="#2ee62e" stroke-width="1"/><polyline points="1012,506 1024,506 1024,500 1031,500" fill="none" stroke="#2ee62e" stroke-width="1"/><polyline points="1024,506 1024,512 1031,512" fill="none" stroke="#2ee62e" stroke-width="1"/><polyline points="1013,521 1022,522" fill="none" stroke="#2ee62e" stroke-width="1"/><rect x="1031" y="451" width="6" height="8" fill="none" stroke="#e81818" stroke-width="1"/><rect x="1031" y="522" width="6" height="9" fill="none" stroke="#e81818" stroke-width="1"/><rect x="1045" y="451" width="6" height="8" fill="none" stroke="#e81818" stroke-width="1"/><rect x="1045" y="522" width="6" height="9" fill="none" stroke="#e81818" stroke-width="1"/><rect x="1060" y="451" width="6" height="8" fill="none" stroke="#e81818" stroke-width="1"/><rect x="1060" y="522" width="6" height="9" fill="none" stroke="#e81818" stroke-width="1"/><rect x="1029" y="456" width="11" height="9" fill="none" stroke="#e81818" stroke-width="1"/><circle cx="1124.6" cy="471.8" r="2" fill="none" stroke="#e81818" stroke-width="1.2" shape-rendering="auto"/><circle cx="1124.6" cy="493.7" r="2" fill="none" stroke="#e81818" stroke-width="1.2" shape-rendering="auto"/><circle cx="1124.6" cy="517.3" r="2" fill="none" stroke="#e81818" stroke-width="1.2" shape-rendering="auto"/><text x="1064.5" y="564.5" fill="#e8e850" font-size="7.5" font-family="Liberation Serif" font-weight="bold" text-anchor="middle" textLength="69" lengthAdjust="spacingAndGlyphs">MİSAFİRHANE BİNASI</text><text x="1017.5" y="577" fill="#e8e850" font-size="5" font-family="Liberation Serif" font-weight="bold" textLength="91" lengthAdjust="spacing">BİNA ANA GİRİŞ TERMİNAL KUTUSU</text><rect x="1018.3" y="584" width="59.2" height="82" fill="none" stroke="#e81818" stroke-width="1"/><line x1="1018.3" y1="588" x2="1077.5" y2="588" stroke="#e81818" stroke-width="1"/><line x1="1018.3" y1="661" x2="1077.5" y2="661" stroke="#e81818" stroke-width="1"/><rect x="1077.5" y="588" width="51" height="78" fill="none" stroke="#e81818" stroke-width="1"/><line x1="1129.5" y1="588" x2="1129.5" y2="666" stroke="#c8a020" stroke-width="1"/><rect x="1031" y="605" width="32.7" height="18.7" fill="#e81818"/><rect x="1033.0" y="609" width="2" height="2" fill="#f0d020"/><rect x="1033.0" y="617" width="2" height="2" fill="#f0d020"/><rect x="1036.8" y="609" width="2" height="2" fill="#f0d020"/><rect x="1036.8" y="617" width="2" height="2" fill="#f0d020"/><rect x="1040.6" y="609" width="2" height="2" fill="#f0d020"/><rect x="1040.6" y="617" width="2" height="2" fill="#f0d020"/><rect x="1044.4" y="609" width="2" height="2" fill="#f0d020"/><rect x="1044.4" y="617" width="2" height="2" fill="#f0d020"/><rect x="1048.2" y="609" width="2" height="2" fill="#f0d020"/><rect x="1048.2" y="617" width="2" height="2" fill="#f0d020"/><rect x="1052.0" y="609" width="2" height="2" fill="#f0d020"/><rect x="1052.0" y="617" width="2" height="2" fill="#f0d020"/><rect x="1055.8" y="609" width="2" height="2" fill="#f0d020"/><rect x="1055.8" y="617" width="2" height="2" fill="#f0d020"/><rect x="1059.6" y="609" width="2" height="2" fill="#f0d020"/><rect x="1059.6" y="617" width="2" height="2" fill="#f0d020"/><rect x="1031" y="631" width="32.7" height="18.7" fill="#e81818"/><rect x="1033.0" y="635" width="2" height="2" fill="#f0d020"/><rect x="1033.0" y="643" width="2" height="2" fill="#f0d020"/><rect x="1036.8" y="635" width="2" height="2" fill="#f0d020"/><rect x="1036.8" y="643" width="2" height="2" fill="#f0d020"/><rect x="1040.6" y="635" width="2" height="2" fill="#f0d020"/><rect x="1040.6" y="643" width="2" height="2" fill="#f0d020"/><rect x="1044.4" y="635" width="2" height="2" fill="#f0d020"/><rect x="1044.4" y="643" width="2" height="2" fill="#f0d020"/><rect x="1048.2" y="635" width="2" height="2" fill="#f0d020"/><rect x="1048.2" y="643" width="2" height="2" fill="#f0d020"/><rect x="1052.0" y="635" width="2" height="2" fill="#f0d020"/><rect x="1052.0" y="643" width="2" height="2" fill="#f0d020"/><rect x="1055.8" y="635" width="2" height="2" fill="#f0d020"/><rect x="1055.8" y="643" width="2" height="2" fill="#f0d020"/><rect x="1059.6" y="635" width="2" height="2" fill="#f0d020"/><rect x="1059.6" y="643" width="2" height="2" fill="#f0d020"/><rect x="1021.5" y="670.8" width="97.5" height="4.8" fill="#f0f000"/><rect x="1003" y="590.1" width="13" height="3" fill="#f0f000"/><rect x="1002" y="595.0" width="11" height="3" fill="#f0f000"/><rect x="1002" y="613.5" width="14" height="3" fill="#f0f000"/><rect x="1002" y="638.5" width="10" height="3" fill="#f0f000"/><rect x="1001" y="653.5" width="12" height="3" fill="#f0f000"/><polyline points="1016,591.6 1030,592" fill="none" stroke="#2ee62e" stroke-width="1"/><polyline points="1016,615 1024,615 1024,610 1031,610" fill="none" stroke="#2ee62e" stroke-width="1"/><polyline points="1024,615 1024,620 1031,620" fill="none" stroke="#2ee62e" stroke-width="1"/><polyline points="1012,640 1024,640 1024,634 1031,634" fill="none" stroke="#2ee62e" stroke-width="1"/><polyline points="1024,640 1024,646 1031,646" fill="none" stroke="#2ee62e" stroke-width="1"/><polyline points="1013,655 1022,656" fill="none" stroke="#2ee62e" stroke-width="1"/><rect x="1031" y="585" width="6" height="8" fill="none" stroke="#e81818" stroke-width="1"/><rect x="1031" y="656" width="6" height="9" fill="none" stroke="#e81818" stroke-width="1"/><rect x="1045" y="585" width="6" height="8" fill="none" stroke="#e81818" stroke-width="1"/><rect x="1045" y="656" width="6" height="9" fill="none" stroke="#e81818" stroke-width="1"/><rect x="1060" y="585" width="6" height="8" fill="none" stroke="#e81818" stroke-width="1"/><rect x="1060" y="656" width="6" height="9" fill="none" stroke="#e81818" stroke-width="1"/><rect x="1029" y="590" width="11" height="9" fill="none" stroke="#e81818" stroke-width="1"/><circle cx="1124.6" cy="605.8" r="2" fill="none" stroke="#e81818" stroke-width="1.2" shape-rendering="auto"/><circle cx="1124.6" cy="627.7" r="2" fill="none" stroke="#e81818" stroke-width="1.2" shape-rendering="auto"/><circle cx="1124.6" cy="651.3" r="2" fill="none" stroke="#e81818" stroke-width="1.2" shape-rendering="auto"/><text x="858" y="563.5" fill="#e8e850" font-size="7.5" font-family="Liberation Serif" font-weight="bold" text-anchor="middle" textLength="67" lengthAdjust="spacingAndGlyphs">MİSAFİRHANE BİNASI</text><text x="858.6" y="571" fill="#e8e850" font-size="7.5" font-family="Liberation Serif" font-weight="bold" text-anchor="middle" textLength="28" lengthAdjust="spacingAndGlyphs">TELEFON</text><text x="861" y="580.5" fill="#e8e850" font-size="7.5" font-family="Liberation Serif" font-weight="bold" text-anchor="middle" textLength="48" lengthAdjust="spacingAndGlyphs">KOLON ŞEMASI</text><text x="953.8" y="563.5" fill="#e8e850" font-size="7.5" font-family="Liberation Serif" font-weight="bold" text-anchor="middle" textLength="68" lengthAdjust="spacingAndGlyphs">MİSAFİRHANE BİNASI</text><text x="954" y="570.5" fill="#e8e850" font-size="7.5" font-family="Liberation Serif" font-weight="bold" text-anchor="middle" textLength="42" lengthAdjust="spacingAndGlyphs">KABLOLU TV</text><text x="953" y="578.5" fill="#e8e850" font-size="7.5" font-family="Liberation Serif" font-weight="bold" text-anchor="middle" textLength="48" lengthAdjust="spacingAndGlyphs">KOLON ŞEMASI</text><line x1="822" y1="472.7" x2="898" y2="472.7" stroke="#2ee62e" stroke-width="1"/><line x1="822" y1="499.4" x2="898" y2="499.4" stroke="#2ee62e" stroke-width="1"/><line x1="843.8" y1="458.7" x2="843.8" y2="505" stroke="#e020e0" stroke-width="1"/><line x1="845.5" y1="458.7" x2="845.5" y2="505" stroke="#e020e0" stroke-width="1"/><line x1="847.2" y1="458.7" x2="847.2" y2="505" stroke="#e020e0" stroke-width="1"/><line x1="877.5" y1="458.7" x2="877.5" y2="505" stroke="#e020e0" stroke-width="1"/><line x1="879.2" y1="458.7" x2="879.2" y2="505" stroke="#e020e0" stroke-width="1"/><line x1="881" y1="458.7" x2="881" y2="505" stroke="#e020e0" stroke-width="1"/><line x1="843.8" y1="458.7" x2="856" y2="458.7" stroke="#e020e0" stroke-width="1"/><line x1="866" y1="458.7" x2="881" y2="458.7" stroke="#e020e0" stroke-width="1"/><rect x="846" y="464.5" width="13.5" height="4.1" fill="none" stroke="#e81818" stroke-width="1"/><rect x="863" y="464.5" width="13.5" height="4.1" fill="none" stroke="#e81818" stroke-width="1"/><rect x="849.6" y="490" width="23.9" height="5" fill="none" stroke="#e81818" stroke-width="1"/><line x1="871.8" y1="492.5" x2="871.8" y2="527" stroke="#e81818" stroke-width="1.2"/><line x1="853" y1="468" x2="853" y2="490" stroke="#a0a0a0" stroke-width="1"/><line x1="868" y1="468" x2="868" y2="490" stroke="#a0a0a0" stroke-width="1"/><rect x="834" y="454" width="8" height="3" fill="#f0f000"/><rect x="845.5" y="454" width="15.5" height="4" fill="#f0f000"/><rect x="881" y="454" width="8" height="3" fill="#f0f000"/><rect x="816.6" y="468" width="20.399999999999977" height="3" fill="#f0f000"/><rect x="829" y="479.3" width="9" height="2.5" fill="#f0f000"/><rect x="850" y="480" width="10" height="2" fill="#f0f000"/><rect x="866" y="480" width="9" height="2" fill="#f0f000"/><rect x="886" y="479.3" width="8" height="2.5" fill="#f0f000"/><rect x="816.6" y="495.3" width="14.799999999999955" height="2.5" fill="#f0f000"/><rect x="816.6" y="503" width="18.100000000000023" height="2" fill="#f0f000"/><rect x="835.6" y="508" width="7.399999999999977" height="2.6999999999999886" fill="#f0f000"/><rect x="879" y="508" width="7" height="2.6999999999999886" fill="#f0f000"/><rect x="836.4" y="519" width="28.600000000000023" height="3" fill="#f0f000"/><rect x="865" y="528" width="17.600000000000023" height="5" fill="#f0f000"/><rect x="833" y="533.7" width="49.60000000000002" height="2.2999999999999545" fill="#f0f000"/><rect x="833" y="538" width="50.39999999999998" height="9.799999999999955" fill="#f0f000"/><rect x="838" y="481" width="2" height="5" fill="#f0f000"/><rect x="882" y="481" width="2" height="5" fill="#f0f000"/><rect x="856" y="490" width="4" height="4" fill="#f0f000"/><rect x="937" y="460" width="41" height="18.5" fill="none" stroke="#e81818" stroke-width="1"/><line x1="957" y1="460" x2="957" y2="478.5" stroke="#e81818" stroke-width="1"/><line x1="937" y1="469" x2="978" y2="469" stroke="#e81818" stroke-width="1"/><rect x="940" y="463" width="3" height="4" fill="#f0f000"/><circle cx="945" cy="465" r="1.8" fill="#e81818"/><rect x="957" y="463" width="3" height="4" fill="#f0f000"/><circle cx="962" cy="465" r="1.8" fill="#e81818"/><rect x="940" y="472" width="3" height="4" fill="#f0f000"/><circle cx="945" cy="474" r="1.8" fill="#e81818"/><rect x="957" y="472" width="3" height="4" fill="#f0f000"/><circle cx="962" cy="474" r="1.8" fill="#e81818"/><line x1="951" y1="464.5" x2="951" y2="510.7" stroke="#8aa8f0" stroke-width="1.3"/><line x1="969" y1="473.6" x2="969" y2="510.7" stroke="#8aa8f0" stroke-width="1.3"/><line x1="927" y1="510" x2="970" y2="510" stroke="#8aa8f0" stroke-width="2.5"/><rect x="914" y="500" width="22" height="21" fill="none" stroke="#e81818" stroke-width="1"/><rect x="921" y="506" width="6" height="6" fill="#e81818"/><polyline points="913.0,512 913,540 938.6,540" fill="none" stroke="#2ee62e" stroke-width="1"/><polyline points="915.5,512 915,537 938.6,537" fill="none" stroke="#2ee62e" stroke-width="1"/><polyline points="918.0,512 917,534 938.6,534" fill="none" stroke="#2ee62e" stroke-width="1"/><polyline points="920.5,512 919,531 938.6,531" fill="none" stroke="#2ee62e" stroke-width="1"/><rect x="910.6" y="463" width="6.399999999999977" height="1.5" fill="#f0f000"/><rect x="910.6" y="474" width="12.399999999999977" height="2.3999999999999773" fill="#f0f000"/><rect x="936" y="527" width="35" height="3" fill="#f0f000"/><rect x="936" y="531" width="19" height="2" fill="#f0f000"/><rect x="936" y="536" width="25" height="4" fill="#f0f000"/><rect x="936" y="540" width="7" height="2" fill="#f0f000"/><line x1="822" y1="604.4" x2="898" y2="604.4" stroke="#2ee62e" stroke-width="1"/><line x1="822" y1="632.4" x2="898" y2="632.4" stroke="#2ee62e" stroke-width="1"/><polyline points="853,592 860,592 860,624" fill="none" stroke="#e020e0" stroke-width="1"/><polyline points="853,613 857,613 857,624" fill="none" stroke="#e020e0" stroke-width="1"/><polyline points="851,620 848,620 848,630 856,630 856,638" fill="none" stroke="#e020e0" stroke-width="1"/><line x1="867.7" y1="624" x2="867.7" y2="658.5" stroke="#e81818" stroke-width="1.2"/><circle cx="867.7" cy="658.5" r="1.5" fill="#e81818"/><rect x="848.8" y="592.5" width="6.600000000000023" height="5.0" fill="#f0f000"/><rect x="816.6" y="601" width="20.399999999999977" height="3" fill="#f0f000"/><rect x="848.8" y="608" width="6.600000000000023" height="2.7000000000000455" fill="#f0f000"/><rect x="848.8" y="612" width="3.2000000000000455" height="2" fill="#f0f000"/><rect x="857" y="624" width="8" height="3" fill="#f0f000"/><rect x="866" y="624" width="3" height="3" fill="#f0f000"/><rect x="871" y="624" width="6.600000000000023" height="4" fill="#f0f000"/><rect x="816.6" y="628.3" width="14.799999999999955" height="2.5" fill="#f0f000"/><rect x="816.6" y="635.4" width="18.100000000000023" height="2.6000000000000227" fill="#f0f000"/><rect x="848.8" y="637" width="3.2000000000000455" height="3" fill="#f0f000"/><rect x="848.8" y="641" width="7.2000000000000455" height="2" fill="#f0f000"/><rect x="836.4" y="652" width="28.600000000000023" height="3" fill="#f0f000"/><rect x="861" y="661" width="19" height="5" fill="#f0f000"/><rect x="833" y="667" width="49.60000000000002" height="2" fill="#f0f000"/><rect x="833" y="671" width="50.39999999999998" height="9" fill="#f0f000"/><rect x="937" y="592.5" width="41" height="19" fill="none" stroke="#e81818" stroke-width="1"/><line x1="957" y1="592.5" x2="957" y2="611.5" stroke="#e81818" stroke-width="1"/><line x1="937" y1="602" x2="978" y2="602" stroke="#e81818" stroke-width="1"/><rect x="940" y="596" width="3" height="4" fill="#f0f000"/><circle cx="945" cy="598" r="1.8" fill="#e81818"/><rect x="957" y="596" width="3" height="4" fill="#f0f000"/><circle cx="962" cy="598" r="1.8" fill="#e81818"/><rect x="957" y="605" width="3" height="4" fill="#f0f000"/><circle cx="962" cy="607" r="1.8" fill="#e81818"/><line x1="951" y1="597.5" x2="951" y2="643" stroke="#e81818" stroke-width="1.5"/><line x1="970.8" y1="606.5" x2="970.8" y2="643.7" stroke="#e81818" stroke-width="1.5"/><line x1="925.5" y1="643" x2="971.6" y2="643" stroke="#e81818" stroke-width="2.5"/><rect x="914" y="633" width="22" height="21.4" fill="none" stroke="#e81818" stroke-width="1"/><rect x="921" y="639" width="6" height="6" fill="#e81818"/><polyline points="913.0,645 913,673 938.6,673" fill="none" stroke="#2ee62e" stroke-width="1"/><polyline points="915.5,645 915,670 938.6,670" fill="none" stroke="#2ee62e" stroke-width="1"/><polyline points="918.0,645 917,667 938.6,667" fill="none" stroke="#2ee62e" stroke-width="1"/><polyline points="920.5,645 919,664 938.6,664" fill="none" stroke="#2ee62e" stroke-width="1"/><rect x="910.6" y="596" width="6.399999999999977" height="1.5" fill="#f0f000"/><rect x="910.6" y="607" width="12.399999999999977" height="2" fill="#f0f000"/><rect x="936" y="659.3" width="35" height="3.300000000000068" fill="#f0f000"/><rect x="936" y="664" width="19" height="2" fill="#f0f000"/><rect x="936" y="669" width="25" height="4" fill="#f0f000"/><rect x="936" y="673" width="7" height="2" fill="#f0f000"/></svg></div><div class="sb" style="left:1133px;top:104px;width:17px;height:636px"></div><div class="sbtn" style="left:1134px;top:105px"><svg class="a" style="left:2px;top:2px" width="11" height="8"><path d="M1.5 6.5 L5.5 2.5 L9.5 6.5" fill="none" stroke="#2a2a3a" stroke-width="2.2"/></svg></div><div class="sbtn" style="left:1134px;top:318px"><svg class="a" style="left:3px;top:4px" width="9" height="7"><path d="M1 0.5H8M1 2.5H8M1 4.5H8M1 6.5H8" stroke="#707080"/></svg></div><div class="sbtn" style="left:1134px;top:723px"><svg class="a" style="left:2px;top:4px" width="11" height="8"><path d="M1.5 1.5 L5.5 5.5 L9.5 1.5" fill="none" stroke="#2a2a3a" stroke-width="2.2"/></svg></div><div class="a" style="left:1150px;top:46px;width:2px;height:712px;background:#e4e4eb"></div><div class="a" style="left:54px;top:740px;width:1079px;height:16px;background:#e6e6ec"></div><div class="a" style="left:54px;top:741px;width:18px;height:15px;background:#ececf0;border:1px solid #9a9aa6;border-top:none"><svg class="a" style="left:0;top:0" width="18" height="15"><path d="M5 3 V12 M13 3 L7 7.5 L13 12Z" stroke="#111" fill="#111" stroke-width="1.5"/></svg></div><div class="a" style="left:72px;top:741px;width:18px;height:15px;background:#ececf0;border:1px solid #9a9aa6;border-top:none"><svg class="a" style="left:0;top:0" width="18" height="15"><path d="M12 3 L6 7.5 L12 12Z" fill="#111"/></svg></div><div class="a" style="left:90px;top:741px;width:18px;height:15px;background:#ececf0;border:1px solid #9a9aa6;border-top:none"><svg class="a" style="left:0;top:0" width="18" height="15"><path d="M6 3 L12 7.5 L6 12Z" fill="#111"/></svg></div><div class="a" style="left:108px;top:741px;width:18px;height:15px;background:#ececf0;border:1px solid #9a9aa6;border-top:none"><svg class="a" style="left:0;top:0" width="18" height="15"><path d="M13 3 V12 M5 3 L11 7.5 L5 12Z" stroke="#111" fill="#111" stroke-width="1.5"/></svg></div><svg class="a" style="left:127px;top:740px" width="150" height="16"><path d="M2 0 L8 15 H44 L47 0Z" fill="#000" stroke="#555"/><path d="M47 0 L44 15 H92 L97 0" fill="#e8e8ee" stroke="#555"/><path d="M97 0 L93 15 H140 L147 0" fill="#e8e8ee" stroke="#555"/></svg><div class="a" style="left:137.5px;top:741px;font-size:12px;color:#fff;transform:scaleX(0.86);transform-origin:0 0">Model</div><div class="a" style="left:178px;top:741px;font-size:12px;transform:scaleX(0.86);transform-origin:0 0">Layout1</div><div class="a" style="left:228.5px;top:741px;font-size:12px;transform:scaleX(0.86);transform-origin:0 0">Layout2</div><div class="sb" style="left:766px;top:740px;width:367px;height:16px;background:linear-gradient(#f0f0f4,#fbfbfc 50%,#eeeef2)"></div><div class="sbtn" style="left:772px;top:741px;height:15px"><svg class="a" style="left:3px;top:2px" width="8" height="11"><path d="M6 1.5 L2 5.5 L6 9.5" fill="none" stroke="#2a2a3a" stroke-width="2.2"/></svg></div><div class="sbtn" style="left:895px;top:741px;height:15px"><svg class="a" style="left:3px;top:3px" width="9" height="9"><path d="M0.5 1V8M2.5 1V8M4.5 1V8M6.5 1V8" stroke="#707080"/></svg></div><div class="sbtn" style="left:1116px;top:741px;height:15px"><svg class="a" style="left:4px;top:2px" width="8" height="11"><path d="M2 1.5 L6 5.5 L2 9.5" fill="none" stroke="#2a2a3a" stroke-width="2.2"/></svg></div><div class="a" style="left:0;top:757px;width:1152px;height:2px;background:#fff"></div><div class="a" style="left:0;top:762px;width:1152px;height:2px;background:#202028"></div><div class="a" style="left:0;top:764px;width:1152px;height:48px;background:#e6e6ec"></div><div class="a" style="left:5px;top:771px;width:9px;height:34px;border-left:2px solid #fff;border-right:2px solid #fff;box-shadow:inset 1px 0 #a8a8b6,inset -1px 0 #a8a8b6"></div><div class="a" style="left:17px;top:768px;width:1127px;height:42px;background:#fff;border-top:2px solid #111;border-left:2px solid #222"></div><div class="a" style="left:19px;top:792px;width:1125px;height:1px;background:#a0a0a8"></div><div class="a mono" style="left:18px;top:770px;font-size:13.33px;white-space:pre">Press ESC or ENTER to exit, or right-click to display shortcut menu.</div><div class="a mono" style="left:18px;top:795px;font-size:13.33px;white-space:pre">Command:</div><div class="sbtn" style="left:1129px;top:771px;width:15px;height:11px"><svg class="a" style="left:3px;top:2px" width="8" height="6"><path d="M1 5 L4 2 L7 5" fill="none" stroke="#333" stroke-width="1.6"/></svg></div><div class="sbtn" style="left:1129px;top:782px;width:15px;height:11px"><svg class="a" style="left:3px;top:2px" width="8" height="6"><path d="M1 1 L4 4 L7 1" fill="none" stroke="#333" stroke-width="1.6"/></svg></div><div class="a" style="left:1060px;top:794px;width:84px;height:15px;background:#f4f4f7"></div><div class="sbtn" style="left:1061px;top:794px;height:14px"><svg class="a" style="left:3px;top:2px" width="8" height="10"><path d="M6 1 L2 5 L6 9" fill="none" stroke="#333" stroke-width="2"/></svg></div><div class="sbtn" style="left:1078px;top:794px;height:14px"><svg class="a" style="left:3px;top:3px" width="9" height="8"><path d="M0.5 0V8M2.5 0V8M4.5 0V8M6.5 0V8" stroke="#808090"/></svg></div><div class="sbtn" style="left:1110px;top:794px;height:14px"><svg class="a" style="left:4px;top:2px" width="8" height="10"><path d="M2 1 L6 5 L2 9" fill="none" stroke="#333" stroke-width="2"/></svg></div><div class="a" style="left:0;top:810px;width:1152px;height:2px;background:#fafafc"></div><div class="a" style="left:0;top:812px;width:1152px;height:20px;background:#e6e6ec"></div><div class="a crd" style="left:5px;top:815px;width:237px;height:17px;border-top:1px solid #a6a6b0;border-left:1px solid #a6a6b0;font-size:12px;padding:1px 0 0 2px;background:#e2e2e8"><span>113531.8161, -484.3253 , 0.0000</span></div><div class="stb" style="left:247px;width:34px"><span>SNAP</span></div><div class="stb" style="left:283px;width:33px"><span>GRID</span></div><div class="stb on" style="left:319px;width:44px"><span>ORTHO</span></div><div class="stb" style="left:366px;width:41px"><span>POLAR</span></div><div class="stb on" style="left:410px;width:43px"><span>OSNAP</span></div><div class="stb on" style="left:455px;width:49px"><span>OTRACK</span></div><div class="stb" style="left:506px;width:29px"><span>DYN</span></div><div class="stb" style="left:537px;width:29px"><span>LWT</span></div><div class="stb on" style="left:570px;width:42px"><span>MODEL</span></div><div class="a" style="left:1093px;top:815px;width:43px;height:17px;border-top:1px solid #fff;border-left:1px solid #fff;background:#e8e8ee"></div><svg class="a" style="left:1096px;top:814px" width="56" height="18"><path d="M7 3 C3 5 3 10 7 12" fill="none" stroke="#5a7ab0" stroke-width="1.5"/><path d="M11 5 L5 16 H17Z" fill="#f0d020" stroke="#806000"/><path d="M11 9 V13" stroke="#111" stroke-width="1.6"/><rect x="21" y="8" width="11" height="9" fill="#d8b020" stroke="#705010"/><path d="M29 8 V4 C29 0 36 0 36 4 V6" fill="none" stroke="#c8a020" stroke-width="2"/><path d="M45 12 H53 L49 16Z" fill="#111"/></svg></body></html>
